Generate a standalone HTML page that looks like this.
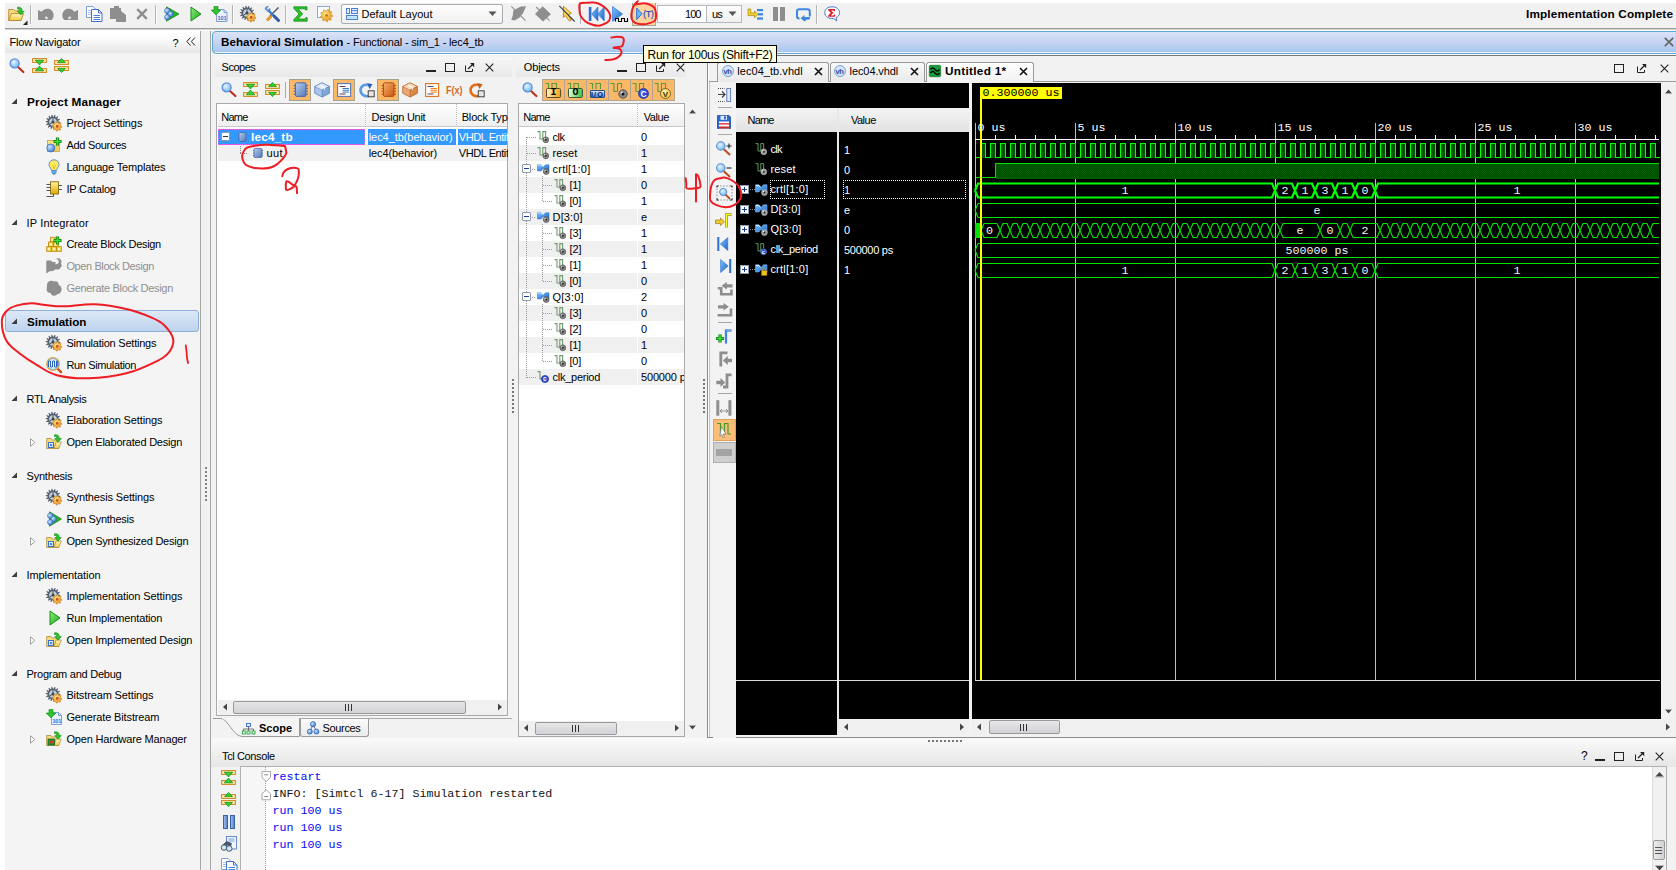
<!DOCTYPE html>
<html><head><meta charset="utf-8"><title>Vivado</title>
<style>
html,body{margin:0;padding:0;}
html{overflow:hidden;width:1676px;height:870px;}
body{width:1676px;height:870px;overflow:hidden;position:relative;background:#f2f2f2;font-family:"Liberation Sans",sans-serif;font-size:11px;color:#000;}
div,span,svg{position:absolute;box-sizing:border-box;}
svg{overflow:visible;}
.t{white-space:nowrap;font-size:11px;}
.m{font-family:"Liberation Mono",monospace;white-space:nowrap;}
</style></head><body>
<div style="left:0;top:0;width:1676px;height:870px;overflow:hidden;">
<div style="left:0px;top:0px;width:1676px;height:29px;background:#f1f1f1;"></div>
<div style="left:0px;top:28px;width:1676px;height:1px;background:#9a9e9a;"></div>
<div style="left:0px;top:29px;width:1676px;height:1px;background:#d4d6d4;"></div>
<div style="left:0px;top:30px;width:1676px;height:1px;background:#fafafa;"></div>
<div style="left:632px;top:2px;width:24px;height:24px;background:#fdd3a0;border:1px solid #a8a890;"></div>
<div style="left:341px;top:4px;width:162px;height:20px;background:linear-gradient(#fdfdfd,#f0f0f0);border:1px solid #a8acb3;border-radius:2px;"></div>
<span class="t" style="left:361.5px;top:7.0px;height:14px;line-height:14px;font-size:11px;letter-spacing:0.005px;">Default Layout</span>
<svg style="left:488px;top:11px" width="9" height="6" viewBox="0 0 9 6" ><path d="M0.5 0.5h8l-4 4.5z" fill="#555"/></svg>
<div style="left:657px;top:5px;width:50px;height:18px;background:#fff;border:1px solid #b5b9c0;"></div>
<span class="t" style="left:685px;top:7.0px;height:14px;line-height:14px;font-size:11px;letter-spacing:-0.941px;">100</span>
<div style="left:706px;top:5px;width:36px;height:18px;background:linear-gradient(#fdfdfd,#f0f0f0);border:1px solid #b5b9c0;"></div>
<span class="t" style="left:712px;top:7.0px;height:14px;line-height:14px;font-size:11px;letter-spacing:-0.745px;">us</span>
<svg style="left:728px;top:11px" width="9" height="6" viewBox="0 0 9 6" ><path d="M0.5 0.5h8l-4 4.5z" fill="#555"/></svg>
<span class="t" style="left:1526px;top:7.0px;height:14px;line-height:14px;font-size:11px;font-weight:bold;letter-spacing:0.130px;transform:scaleX(1.0700);transform-origin:0 50%;">Implementation Complete</span>
<div style="left:30px;top:5px;width:1px;height:19px;background:#b4b4b4;"></div>
<div style="left:31px;top:5px;width:1px;height:19px;background:#fbfbfb;"></div>
<div style="left:155px;top:5px;width:1px;height:19px;background:#b4b4b4;"></div>
<div style="left:156px;top:5px;width:1px;height:19px;background:#fbfbfb;"></div>
<div style="left:232px;top:5px;width:1px;height:19px;background:#b4b4b4;"></div>
<div style="left:233px;top:5px;width:1px;height:19px;background:#fbfbfb;"></div>
<div style="left:285px;top:5px;width:1px;height:19px;background:#b4b4b4;"></div>
<div style="left:286px;top:5px;width:1px;height:19px;background:#fbfbfb;"></div>
<div style="left:580px;top:5px;width:1px;height:19px;background:#b4b4b4;"></div>
<div style="left:581px;top:5px;width:1px;height:19px;background:#fbfbfb;"></div>
<div style="left:816px;top:5px;width:1px;height:19px;background:#b4b4b4;"></div>
<div style="left:817px;top:5px;width:1px;height:19px;background:#fbfbfb;"></div>
<div style="left:5px;top:31px;width:195px;height:839px;background:#f4f4f4;"></div>
<div style="left:200px;top:31px;width:1px;height:839px;background:#a3a8a3;"></div>
<div style="left:201px;top:31px;width:9px;height:839px;background:#f1f1f1;"></div>
<div style="left:210px;top:31px;width:1px;height:839px;background:#a3a8a3;"></div>
<div style="left:5px;top:31px;width:195px;height:22px;background:linear-gradient(#ffffff 0,#fbfbfb 35%,#e6e6e6 100%);"></div>
<span class="t" style="left:9.5px;top:35.0px;height:14px;line-height:14px;font-size:11px;letter-spacing:-0.175px;">Flow Navigator</span>
<span class="t" style="left:172.5px;top:35.5px;height:14px;line-height:14px;font-size:11px;letter-spacing:-0.294px;">?</span>
<svg style="left:186px;top:37px" width="10" height="9" viewBox="0 0 10 9" ><path d="M4.5 0.5L0.8 4.5L4.5 8.5M9 0.5L5.3 4.5L9 8.5" fill="none" stroke="#222" stroke-width="1"/></svg>
<div style="left:205px;top:467px;width:2px;height:2px;background:#828282;"></div>
<div style="left:205px;top:471px;width:2px;height:2px;background:#828282;"></div>
<div style="left:205px;top:475px;width:2px;height:2px;background:#828282;"></div>
<div style="left:205px;top:479px;width:2px;height:2px;background:#828282;"></div>
<div style="left:205px;top:483px;width:2px;height:2px;background:#828282;"></div>
<div style="left:205px;top:487px;width:2px;height:2px;background:#828282;"></div>
<div style="left:205px;top:491px;width:2px;height:2px;background:#828282;"></div>
<div style="left:205px;top:495px;width:2px;height:2px;background:#828282;"></div>
<div style="left:205px;top:499px;width:2px;height:2px;background:#828282;"></div>
<div style="left:5px;top:310px;width:194px;height:22px;background:linear-gradient(#dde8f6,#bdd3ee);border:1px solid #8fb0d8;border-radius:3px;"></div>
<svg style="left:11px;top:98px" width="7" height="7" viewBox="0 0 7 7" ><path d="M6 0.5V6H0.5z" fill="#3c3c3c"/></svg>
<span class="t" style="left:27.2px;top:95.0px;height:14px;line-height:14px;font-size:11px;font-weight:bold;letter-spacing:0.156px;transform:scaleX(1.0700);transform-origin:0 50%;">Project Manager</span>
<span class="t" style="left:66.4px;top:116.0px;height:14px;line-height:14px;font-size:11px;letter-spacing:-0.067px;">Project Settings</span>
<span class="t" style="left:66.4px;top:138.0px;height:14px;line-height:14px;font-size:11px;letter-spacing:-0.284px;">Add Sources</span>
<span class="t" style="left:66.4px;top:160.0px;height:14px;line-height:14px;font-size:11px;letter-spacing:-0.168px;">Language Templates</span>
<span class="t" style="left:66.4px;top:182.0px;height:14px;line-height:14px;font-size:11px;letter-spacing:-0.175px;">IP Catalog</span>
<svg style="left:11px;top:219px" width="7" height="7" viewBox="0 0 7 7" ><path d="M6 0.5V6H0.5z" fill="#3c3c3c"/></svg>
<span class="t" style="left:26.5px;top:216.0px;height:14px;line-height:14px;font-size:11px;letter-spacing:0.157px;">IP Integrator</span>
<span class="t" style="left:66.4px;top:237.0px;height:14px;line-height:14px;font-size:11px;letter-spacing:-0.301px;">Create Block Design</span>
<span class="t" style="left:66.4px;top:259.0px;height:14px;line-height:14px;font-size:11px;letter-spacing:-0.392px;color:#8f8f8f;">Open Block Design</span>
<span class="t" style="left:66.4px;top:281.0px;height:14px;line-height:14px;font-size:11px;letter-spacing:-0.313px;color:#8f8f8f;">Generate Block Design</span>
<svg style="left:11px;top:318px" width="7" height="7" viewBox="0 0 7 7" ><path d="M6 0.5V6H0.5z" fill="#3c3c3c"/></svg>
<span class="t" style="left:27.2px;top:315.0px;height:14px;line-height:14px;font-size:11px;font-weight:bold;letter-spacing:0.000px;transform:scaleX(1.0565);transform-origin:0 50%;">Simulation</span>
<span class="t" style="left:66.4px;top:336.0px;height:14px;line-height:14px;font-size:11px;letter-spacing:-0.225px;">Simulation Settings</span>
<span class="t" style="left:66.4px;top:358.0px;height:14px;line-height:14px;font-size:11px;letter-spacing:-0.355px;">Run Simulation</span>
<svg style="left:11px;top:395px" width="7" height="7" viewBox="0 0 7 7" ><path d="M6 0.5V6H0.5z" fill="#3c3c3c"/></svg>
<span class="t" style="left:26.5px;top:392.0px;height:14px;line-height:14px;font-size:11px;letter-spacing:-0.312px;">RTL Analysis</span>
<span class="t" style="left:66.4px;top:413.0px;height:14px;line-height:14px;font-size:11px;letter-spacing:-0.126px;">Elaboration Settings</span>
<span class="t" style="left:66.4px;top:435.0px;height:14px;line-height:14px;font-size:11px;letter-spacing:-0.217px;">Open Elaborated Design</span>
<svg style="left:30px;top:438px" width="6" height="9" viewBox="0 0 6 9" ><path d="M0.5 0.7L4.8 4.5L0.5 8.3z" fill="#fdfdfd" stroke="#a0a0a0" stroke-width="1"/></svg>
<svg style="left:11px;top:472px" width="7" height="7" viewBox="0 0 7 7" ><path d="M6 0.5V6H0.5z" fill="#3c3c3c"/></svg>
<span class="t" style="left:26.5px;top:469.0px;height:14px;line-height:14px;font-size:11px;letter-spacing:-0.199px;">Synthesis</span>
<span class="t" style="left:66.4px;top:490.0px;height:14px;line-height:14px;font-size:11px;letter-spacing:-0.143px;">Synthesis Settings</span>
<span class="t" style="left:66.4px;top:512.0px;height:14px;line-height:14px;font-size:11px;letter-spacing:-0.258px;">Run Synthesis</span>
<span class="t" style="left:66.4px;top:534.0px;height:14px;line-height:14px;font-size:11px;letter-spacing:-0.231px;">Open Synthesized Design</span>
<svg style="left:30px;top:537px" width="6" height="9" viewBox="0 0 6 9" ><path d="M0.5 0.7L4.8 4.5L0.5 8.3z" fill="#fdfdfd" stroke="#a0a0a0" stroke-width="1"/></svg>
<svg style="left:11px;top:571px" width="7" height="7" viewBox="0 0 7 7" ><path d="M6 0.5V6H0.5z" fill="#3c3c3c"/></svg>
<span class="t" style="left:26.5px;top:568.0px;height:14px;line-height:14px;font-size:11px;letter-spacing:-0.089px;">Implementation</span>
<span class="t" style="left:66.4px;top:589.0px;height:14px;line-height:14px;font-size:11px;letter-spacing:-0.089px;">Implementation Settings</span>
<span class="t" style="left:66.4px;top:611.0px;height:14px;line-height:14px;font-size:11px;letter-spacing:-0.140px;">Run Implementation</span>
<span class="t" style="left:66.4px;top:633.0px;height:14px;line-height:14px;font-size:11px;letter-spacing:-0.216px;">Open Implemented Design</span>
<svg style="left:30px;top:636px" width="6" height="9" viewBox="0 0 6 9" ><path d="M0.5 0.7L4.8 4.5L0.5 8.3z" fill="#fdfdfd" stroke="#a0a0a0" stroke-width="1"/></svg>
<svg style="left:11px;top:670px" width="7" height="7" viewBox="0 0 7 7" ><path d="M6 0.5V6H0.5z" fill="#3c3c3c"/></svg>
<span class="t" style="left:26.5px;top:667.0px;height:14px;line-height:14px;font-size:11px;letter-spacing:-0.246px;">Program and Debug</span>
<span class="t" style="left:66.4px;top:688.0px;height:14px;line-height:14px;font-size:11px;letter-spacing:-0.129px;">Bitstream Settings</span>
<span class="t" style="left:66.4px;top:710.0px;height:14px;line-height:14px;font-size:11px;letter-spacing:-0.136px;">Generate Bitstream</span>
<span class="t" style="left:66.4px;top:732.0px;height:14px;line-height:14px;font-size:11px;letter-spacing:-0.177px;">Open Hardware Manager</span>
<svg style="left:30px;top:735px" width="6" height="9" viewBox="0 0 6 9" ><path d="M0.5 0.7L4.8 4.5L0.5 8.3z" fill="#fdfdfd" stroke="#a0a0a0" stroke-width="1"/></svg>
<div style="left:212px;top:31px;width:1470px;height:23px;background:linear-gradient(#dae3f7,#c4d2f2 55%,#a5c6ee);border:1px solid #62a8d4;border-radius:4px;"></div>
<div style="left:215px;top:52px;width:1461px;height:1px;background:#eef4fc;"></div>
<div style="left:211px;top:54px;width:1465px;height:1px;background:#fbfbfb;"></div>
<span class="t" style="left:220.5px;top:35.0px;height:14px;line-height:14px;font-size:11px;font-weight:bold;letter-spacing:-0.000px;transform:scaleX(1.0603);transform-origin:0 50%;">Behavioral Simulation</span>
<span class="t" style="left:346.5px;top:35.0px;height:14px;line-height:14px;font-size:11px;letter-spacing:-0.164px;">- Functional - sim_1 - lec4_tb</span>
<svg style="left:1664px;top:37px" width="10" height="10" viewBox="0 0 10 10" ><path d="M0.8 0.8L9.2 9.2M9.2 0.8L0.8 9.2" stroke="#666" stroke-width="1.7"/></svg>
<div style="left:215px;top:57px;width:297px;height:20px;background:linear-gradient(#f6f6f6,#e9e9e9);"></div>
<span class="t" style="left:221.6px;top:60.0px;height:14px;line-height:14px;font-size:11px;letter-spacing:-0.489px;">Scopes</span>
<div style="left:426px;top:70px;width:10px;height:2px;background:#222;"></div>
<div style="left:445px;top:63px;width:10px;height:9px;border:1px solid #222;border-top-width:1.5px;"></div>
<svg style="left:464px;top:62px" width="11" height="11" viewBox="0 0 11 11" ><path d="M1.5 3.5V9.5H8.5V7" fill="none" stroke="#222" stroke-width="1"/><path d="M4 7L9.5 1.5" stroke="#222" stroke-width="1.2"/><path d="M6 1h4.2v4.2z" fill="#222"/></svg>
<svg style="left:485px;top:63px" width="9" height="9" viewBox="0 0 9 9" ><path d="M0.7 0.7L8.3 8.3M8.3 0.7L0.7 8.3" stroke="#222" stroke-width="1.1"/></svg>
<div style="left:289px;top:79px;width:22px;height:22px;background:#fbb868;border:1px solid #a4a48c;"></div>
<div style="left:333px;top:79px;width:22px;height:22px;background:#fbb868;border:1px solid #a4a48c;"></div>
<div style="left:377px;top:79px;width:22px;height:22px;background:#fbb868;border:1px solid #a4a48c;"></div>
<div style="left:285px;top:82px;width:1px;height:16px;background:#aaa;"></div>
<div style="left:216px;top:103px;width:292px;height:613px;background:#fff;border:1px solid #a9a9a9;"></div>
<div style="left:218px;top:104px;width:289px;height:23px;background:linear-gradient(#ffffff,#efefef);border-bottom:1px solid #c9c9c9;"></div>
<div style="left:365px;top:104px;width:1px;height:23px;background:repeating-linear-gradient(#bbb 0 1px,#fff 1px 2px);"></div>
<div style="left:456px;top:104px;width:1px;height:23px;background:repeating-linear-gradient(#bbb 0 1px,#fff 1px 2px);"></div>
<span class="t" style="left:221.3px;top:110.0px;height:14px;line-height:14px;font-size:11px;letter-spacing:-0.784px;">Name</span>
<span class="t" style="left:371.5px;top:110.0px;height:14px;line-height:14px;font-size:11px;letter-spacing:-0.272px;">Design Unit</span>
<span class="t" style="left:461.7px;top:110.0px;height:14px;line-height:14px;font-size:11px;letter-spacing:-0.169px;width:46px;overflow:hidden;">Block Type</span>
<div style="left:218px;top:129px;width:147px;height:16px;background:#3399ff;border:1px dotted #ee66ee;"></div>
<div style="left:368px;top:129px;width:88px;height:16px;background:#3399ff;"></div>
<div style="left:458px;top:129px;width:49px;height:16px;background:#3399ff;"></div>
<div style="left:221px;top:132px;width:9px;height:9px;background:#fff;border:1px solid #8c9cb0;"></div>
<div style="left:223px;top:136px;width:5px;height:1px;background:#333;"></div>
<span class="t" style="left:251.2px;top:130.0px;height:14px;line-height:14px;font-size:11px;font-weight:bold;letter-spacing:0.163px;transform:scaleX(1.0700);transform-origin:0 50%;color:#fff;">lec4_tb</span>
<span class="t" style="left:368.7px;top:130.0px;height:14px;line-height:14px;font-size:11px;letter-spacing:-0.060px;color:#fff;">lec4_tb(behavior)</span>
<span class="t" style="left:458.8px;top:130.0px;height:14px;line-height:14px;font-size:11px;letter-spacing:-0.429px;color:#fff;width:49px;overflow:hidden;">VHDL Entity</span>
<div style="left:218px;top:145px;width:289px;height:16px;background:#f1f1f1;"></div>
<span class="t" style="left:266.6px;top:146.0px;height:14px;line-height:14px;font-size:11px;letter-spacing:0.283px;">uut</span>
<span class="t" style="left:368.7px;top:146.0px;height:14px;line-height:14px;font-size:11px;letter-spacing:-0.089px;">lec4(behavior)</span>
<span class="t" style="left:458.8px;top:146.0px;height:14px;line-height:14px;font-size:11px;letter-spacing:-0.429px;width:49px;overflow:hidden;">VHDL Entity</span>
<div style="left:240px;top:146px;width:1px;height:8px;background:repeating-linear-gradient(#888 0 1px,transparent 1px 2px);"></div>
<div style="left:240px;top:153px;width:8px;height:1px;background:repeating-linear-gradient(90deg,#888 0 1px,transparent 1px 2px);"></div>
<div style="left:218px;top:700px;width:289px;height:15px;background:#f0f0f0;"></div>
<svg style="left:222px;top:703px" width="6" height="8" viewBox="0 0 6 8" ><path d="M5 0.5V7.5L1 4z" fill="#444"/></svg>
<svg style="left:497px;top:703px" width="6" height="8" viewBox="0 0 6 8" ><path d="M1 0.5V7.5L5 4z" fill="#444"/></svg>
<div style="left:233px;top:701px;width:233px;height:13px;background:linear-gradient(#e6e6e6,#d2d2d8);border:1px solid #9a9a9a;border-radius:2px;"></div>
<div style="left:345px;top:704px;width:1px;height:7px;background:#333;"></div>
<div style="left:348px;top:704px;width:1px;height:7px;background:#333;"></div>
<div style="left:351px;top:704px;width:1px;height:7px;background:#333;"></div>
<div style="left:213px;top:718px;width:299px;height:1px;background:#a9a9a9;"></div>
<svg style="left:213px;top:718px" width="90" height="22" viewBox="0 0 90 22" ><path d="M0 0.5H8C15 1 20 18 29 18.5H86.5V0.5" fill="#f4f4f4" stroke="#9a9a9a" stroke-width="1"/><path d="M9 0.5H86" stroke="#f4f4f4" stroke-width="1.5"/></svg>
<span class="t" style="left:258.7px;top:721.0px;height:14px;line-height:14px;font-size:11px;font-weight:bold;letter-spacing:0.000px;transform:scaleX(0.9996);transform-origin:0 50%;">Scope</span>
<div style="left:300px;top:719px;width:69px;height:18px;background:linear-gradient(#fafafa,#ebebeb);border:1px solid #9a9a9a;border-top:none;border-radius:0 0 3px 3px;"></div>
<span class="t" style="left:322.6px;top:721.0px;height:14px;line-height:14px;font-size:11px;letter-spacing:-0.362px;">Sources</span>
<div style="left:516px;top:57px;width:170px;height:20px;background:linear-gradient(#f6f6f6,#e9e9e9);"></div>
<span class="t" style="left:523.8px;top:60.0px;height:14px;line-height:14px;font-size:11px;letter-spacing:-0.168px;">Objects</span>
<div style="left:617px;top:70px;width:10px;height:2px;background:#222;"></div>
<div style="left:636px;top:63px;width:10px;height:9px;border:1px solid #222;border-top-width:1.5px;"></div>
<svg style="left:655px;top:62px" width="11" height="11" viewBox="0 0 11 11" ><path d="M1.5 3.5V9.5H8.5V7" fill="none" stroke="#222" stroke-width="1"/><path d="M4 7L9.5 1.5" stroke="#222" stroke-width="1.2"/><path d="M6 1h4.2v4.2z" fill="#222"/></svg>
<svg style="left:676px;top:63px" width="9" height="9" viewBox="0 0 9 9" ><path d="M0.7 0.7L8.3 8.3M8.3 0.7L0.7 8.3" stroke="#222" stroke-width="1.1"/></svg>
<div style="left:542px;top:79px;width:22.5px;height:22px;background:#fbb868;border:1px solid #b4a48c;"></div>
<div style="left:564px;top:79px;width:22.5px;height:22px;background:#fbb868;border:1px solid #b4a48c;"></div>
<div style="left:586px;top:79px;width:22.5px;height:22px;background:#fbb868;border:1px solid #b4a48c;"></div>
<div style="left:608px;top:79px;width:22.5px;height:22px;background:#fbb868;border:1px solid #b4a48c;"></div>
<div style="left:630px;top:79px;width:22.5px;height:22px;background:#fbb868;border:1px solid #b4a48c;"></div>
<div style="left:652px;top:79px;width:22.5px;height:22px;background:#fbb868;border:1px solid #b4a48c;"></div>
<div style="left:518px;top:103px;width:167px;height:634px;background:#fff;border:1px solid #a9a9a9;"></div>
<div style="left:519px;top:104px;width:165px;height:23px;background:linear-gradient(#ffffff,#efefef);border-bottom:1px solid #c9c9c9;"></div>
<div style="left:637px;top:104px;width:1px;height:23px;background:repeating-linear-gradient(#bbb 0 1px,#fff 1px 2px);"></div>
<span class="t" style="left:523.2px;top:110.0px;height:14px;line-height:14px;font-size:11px;letter-spacing:-0.727px;">Name</span>
<span class="t" style="left:643.7px;top:110.0px;height:14px;line-height:14px;font-size:11px;letter-spacing:-0.426px;">Value</span>
<span class="t" style="left:552.6px;top:130.0px;height:14px;line-height:14px;font-size:11px;letter-spacing:-0.578px;">clk</span>
<span class="t" style="left:641px;top:130.0px;height:14px;line-height:14px;font-size:11px;letter-spacing:-0.294px;width:43px;overflow:hidden;">0</span>
<div style="left:519px;top:145px;width:165px;height:16px;background:#f0f0f0;"></div>
<span class="t" style="left:552.6px;top:146.0px;height:14px;line-height:14px;font-size:11px;letter-spacing:0.077px;">reset</span>
<span class="t" style="left:641px;top:146.0px;height:14px;line-height:14px;font-size:11px;letter-spacing:-0.294px;width:43px;overflow:hidden;">1</span>
<span class="t" style="left:552.6px;top:162.0px;height:14px;line-height:14px;font-size:11px;letter-spacing:0.192px;">crtl[1:0]</span>
<span class="t" style="left:641px;top:162.0px;height:14px;line-height:14px;font-size:11px;letter-spacing:-0.294px;width:43px;overflow:hidden;">1</span>
<div style="left:519px;top:177px;width:165px;height:16px;background:#f0f0f0;"></div>
<span class="t" style="left:569.5px;top:178.0px;height:14px;line-height:14px;font-size:11px;letter-spacing:-0.332px;">[1]</span>
<span class="t" style="left:641px;top:178.0px;height:14px;line-height:14px;font-size:11px;letter-spacing:-0.294px;width:43px;overflow:hidden;">0</span>
<span class="t" style="left:569.5px;top:194.0px;height:14px;line-height:14px;font-size:11px;letter-spacing:-0.252px;">[0]</span>
<span class="t" style="left:641px;top:194.0px;height:14px;line-height:14px;font-size:11px;letter-spacing:-0.294px;width:43px;overflow:hidden;">1</span>
<div style="left:519px;top:209px;width:165px;height:16px;background:#f0f0f0;"></div>
<span class="t" style="left:552.6px;top:210.0px;height:14px;line-height:14px;font-size:11px;letter-spacing:0.119px;">D[3:0]</span>
<span class="t" style="left:641px;top:210.0px;height:14px;line-height:14px;font-size:11px;letter-spacing:-0.294px;width:43px;overflow:hidden;">e</span>
<span class="t" style="left:569.5px;top:226.0px;height:14px;line-height:14px;font-size:11px;letter-spacing:-0.092px;">[3]</span>
<span class="t" style="left:641px;top:226.0px;height:14px;line-height:14px;font-size:11px;letter-spacing:-0.294px;width:43px;overflow:hidden;">1</span>
<div style="left:519px;top:241px;width:165px;height:16px;background:#f0f0f0;"></div>
<span class="t" style="left:569.5px;top:242.0px;height:14px;line-height:14px;font-size:11px;letter-spacing:-0.092px;">[2]</span>
<span class="t" style="left:641px;top:242.0px;height:14px;line-height:14px;font-size:11px;letter-spacing:-0.294px;width:43px;overflow:hidden;">1</span>
<span class="t" style="left:569.5px;top:258.0px;height:14px;line-height:14px;font-size:11px;letter-spacing:-0.332px;">[1]</span>
<span class="t" style="left:641px;top:258.0px;height:14px;line-height:14px;font-size:11px;letter-spacing:-0.294px;width:43px;overflow:hidden;">1</span>
<div style="left:519px;top:273px;width:165px;height:16px;background:#f0f0f0;"></div>
<span class="t" style="left:569.5px;top:274.0px;height:14px;line-height:14px;font-size:11px;letter-spacing:-0.252px;">[0]</span>
<span class="t" style="left:641px;top:274.0px;height:14px;line-height:14px;font-size:11px;letter-spacing:-0.294px;width:43px;overflow:hidden;">0</span>
<span class="t" style="left:552.6px;top:290.0px;height:14px;line-height:14px;font-size:11px;letter-spacing:0.189px;">Q[3:0]</span>
<span class="t" style="left:641px;top:290.0px;height:14px;line-height:14px;font-size:11px;letter-spacing:-0.294px;width:43px;overflow:hidden;">2</span>
<div style="left:519px;top:305px;width:165px;height:16px;background:#f0f0f0;"></div>
<span class="t" style="left:569.5px;top:306.0px;height:14px;line-height:14px;font-size:11px;letter-spacing:-0.092px;">[3]</span>
<span class="t" style="left:641px;top:306.0px;height:14px;line-height:14px;font-size:11px;letter-spacing:-0.294px;width:43px;overflow:hidden;">0</span>
<span class="t" style="left:569.5px;top:322.0px;height:14px;line-height:14px;font-size:11px;letter-spacing:-0.092px;">[2]</span>
<span class="t" style="left:641px;top:322.0px;height:14px;line-height:14px;font-size:11px;letter-spacing:-0.294px;width:43px;overflow:hidden;">0</span>
<div style="left:519px;top:337px;width:165px;height:16px;background:#f0f0f0;"></div>
<span class="t" style="left:569.5px;top:338.0px;height:14px;line-height:14px;font-size:11px;letter-spacing:-0.332px;">[1]</span>
<span class="t" style="left:641px;top:338.0px;height:14px;line-height:14px;font-size:11px;letter-spacing:-0.294px;width:43px;overflow:hidden;">1</span>
<span class="t" style="left:569.5px;top:354.0px;height:14px;line-height:14px;font-size:11px;letter-spacing:-0.252px;">[0]</span>
<span class="t" style="left:641px;top:354.0px;height:14px;line-height:14px;font-size:11px;letter-spacing:-0.294px;width:43px;overflow:hidden;">0</span>
<div style="left:519px;top:369px;width:165px;height:16px;background:#f0f0f0;"></div>
<span class="t" style="left:552.6px;top:370.0px;height:14px;line-height:14px;font-size:11px;letter-spacing:-0.267px;">clk_period</span>
<span class="t" style="left:641px;top:370.0px;height:14px;line-height:14px;font-size:11px;letter-spacing:-0.162px;width:43px;overflow:hidden;">500000 ps</span>
<div style="left:637px;top:128px;width:1px;height:257px;background:#fff;"></div>
<div style="left:526px;top:137px;width:1px;height:241px;background:repeating-linear-gradient(#999 0 1px,transparent 1px 2px);"></div>
<div style="left:522px;top:164px;width:9px;height:9px;background:#fff;border:1px solid #8c9cb0;border-radius:1px;"></div>
<div style="left:524px;top:168px;width:5px;height:1px;background:#1a3a8a;"></div>
<div style="left:522px;top:212px;width:9px;height:9px;background:#fff;border:1px solid #8c9cb0;border-radius:1px;"></div>
<div style="left:524px;top:216px;width:5px;height:1px;background:#1a3a8a;"></div>
<div style="left:522px;top:292px;width:9px;height:9px;background:#fff;border:1px solid #8c9cb0;border-radius:1px;"></div>
<div style="left:524px;top:296px;width:5px;height:1px;background:#1a3a8a;"></div>
<div style="left:527px;top:137px;width:9px;height:1px;background:repeating-linear-gradient(90deg,#999 0 1px,transparent 1px 2px);"></div>
<div style="left:527px;top:153px;width:9px;height:1px;background:repeating-linear-gradient(90deg,#999 0 1px,transparent 1px 2px);"></div>
<div style="left:527px;top:377px;width:9px;height:1px;background:repeating-linear-gradient(90deg,#999 0 1px,transparent 1px 2px);"></div>
<div style="left:532px;top:169px;width:4px;height:1px;background:repeating-linear-gradient(90deg,#999 0 1px,transparent 1px 2px);"></div>
<div style="left:532px;top:217px;width:4px;height:1px;background:repeating-linear-gradient(90deg,#999 0 1px,transparent 1px 2px);"></div>
<div style="left:532px;top:297px;width:4px;height:1px;background:repeating-linear-gradient(90deg,#999 0 1px,transparent 1px 2px);"></div>
<div style="left:542px;top:176px;width:1px;height:25px;background:repeating-linear-gradient(#999 0 1px,transparent 1px 2px);"></div>
<div style="left:543px;top:185px;width:9px;height:1px;background:repeating-linear-gradient(90deg,#999 0 1px,transparent 1px 2px);"></div>
<div style="left:543px;top:201px;width:9px;height:1px;background:repeating-linear-gradient(90deg,#999 0 1px,transparent 1px 2px);"></div>
<div style="left:542px;top:224px;width:1px;height:57px;background:repeating-linear-gradient(#999 0 1px,transparent 1px 2px);"></div>
<div style="left:543px;top:233px;width:9px;height:1px;background:repeating-linear-gradient(90deg,#999 0 1px,transparent 1px 2px);"></div>
<div style="left:543px;top:249px;width:9px;height:1px;background:repeating-linear-gradient(90deg,#999 0 1px,transparent 1px 2px);"></div>
<div style="left:543px;top:265px;width:9px;height:1px;background:repeating-linear-gradient(90deg,#999 0 1px,transparent 1px 2px);"></div>
<div style="left:543px;top:281px;width:9px;height:1px;background:repeating-linear-gradient(90deg,#999 0 1px,transparent 1px 2px);"></div>
<div style="left:542px;top:304px;width:1px;height:57px;background:repeating-linear-gradient(#999 0 1px,transparent 1px 2px);"></div>
<div style="left:543px;top:313px;width:9px;height:1px;background:repeating-linear-gradient(90deg,#999 0 1px,transparent 1px 2px);"></div>
<div style="left:543px;top:329px;width:9px;height:1px;background:repeating-linear-gradient(90deg,#999 0 1px,transparent 1px 2px);"></div>
<div style="left:543px;top:345px;width:9px;height:1px;background:repeating-linear-gradient(90deg,#999 0 1px,transparent 1px 2px);"></div>
<div style="left:543px;top:361px;width:9px;height:1px;background:repeating-linear-gradient(90deg,#999 0 1px,transparent 1px 2px);"></div>
<svg style="left:689px;top:108.5px" width="7" height="5" viewBox="0 0 7 5" ><path d="M0.3 4.2H6.7L3.5 0.6z" fill="#444"/><path d="M0 4.6H7" stroke="#999" stroke-width="0.6"/></svg>
<svg style="left:689px;top:725px" width="7" height="5" viewBox="0 0 7 5" ><path d="M0.3 0.8H6.7L3.5 4.4z" fill="#444"/><path d="M0 0.4H7" stroke="#999" stroke-width="0.6"/></svg>
<div style="left:519px;top:721px;width:165px;height:15px;background:#f0f0f0;"></div>
<svg style="left:523px;top:724px" width="6" height="8" viewBox="0 0 6 8" ><path d="M5 0.5V7.5L1 4z" fill="#444"/></svg>
<svg style="left:674px;top:724px" width="6" height="8" viewBox="0 0 6 8" ><path d="M1 0.5V7.5L5 4z" fill="#444"/></svg>
<div style="left:535px;top:722px;width:82px;height:13px;background:linear-gradient(#e6e6e6,#d2d2d8);border:1px solid #9a9a9a;border-radius:2px;"></div>
<div style="left:572px;top:725px;width:1px;height:7px;background:#333;"></div>
<div style="left:575px;top:725px;width:1px;height:7px;background:#333;"></div>
<div style="left:578px;top:725px;width:1px;height:7px;background:#333;"></div>
<div style="left:703px;top:379px;width:2px;height:2px;background:#767676;"></div>
<div style="left:512px;top:379px;width:2px;height:2px;background:#767676;"></div>
<div style="left:703px;top:383px;width:2px;height:2px;background:#767676;"></div>
<div style="left:512px;top:383px;width:2px;height:2px;background:#767676;"></div>
<div style="left:703px;top:387px;width:2px;height:2px;background:#767676;"></div>
<div style="left:512px;top:387px;width:2px;height:2px;background:#767676;"></div>
<div style="left:703px;top:391px;width:2px;height:2px;background:#767676;"></div>
<div style="left:512px;top:391px;width:2px;height:2px;background:#767676;"></div>
<div style="left:703px;top:395px;width:2px;height:2px;background:#767676;"></div>
<div style="left:512px;top:395px;width:2px;height:2px;background:#767676;"></div>
<div style="left:703px;top:399px;width:2px;height:2px;background:#767676;"></div>
<div style="left:512px;top:399px;width:2px;height:2px;background:#767676;"></div>
<div style="left:703px;top:403px;width:2px;height:2px;background:#767676;"></div>
<div style="left:512px;top:403px;width:2px;height:2px;background:#767676;"></div>
<div style="left:703px;top:407px;width:2px;height:2px;background:#767676;"></div>
<div style="left:512px;top:407px;width:2px;height:2px;background:#767676;"></div>
<div style="left:703px;top:411px;width:2px;height:2px;background:#767676;"></div>
<div style="left:512px;top:411px;width:2px;height:2px;background:#767676;"></div>
<div style="left:707px;top:55px;width:969px;height:1px;background:#787878;"></div>
<div style="left:707px;top:81px;width:969px;height:1px;background:#9a9a9a;"></div>
<div style="left:707px;top:55px;width:1px;height:683px;background:#8a8a8a;"></div>
<div style="left:708px;top:56px;width:1px;height:682px;background:#fff;"></div>
<div style="left:709px;top:82px;width:1px;height:656px;background:#c0c0c0;"></div>
<div style="left:707px;top:737px;width:969px;height:1px;background:#8a8a8a;"></div>
<div style="left:707px;top:738px;width:969px;height:1px;background:#c0c0c0;"></div>
<div style="left:717px;top:62px;width:112px;height:20px;background:linear-gradient(#f9f9f9,#e9e9e9);border:1px solid #9a9a9a;border-bottom:none;border-radius:3px 3px 0 0;"></div>
<div style="left:830px;top:62px;width:95px;height:20px;background:linear-gradient(#f9f9f9,#e9e9e9);border:1px solid #9a9a9a;border-bottom:none;border-radius:3px 3px 0 0;"></div>
<div style="left:926px;top:62px;width:108px;height:20px;background:linear-gradient(#ffffff,#f1f1f1);border:1px solid #9a9a9a;border-bottom:none;border-radius:3px 3px 0 0;"></div>
<div style="left:927px;top:81px;width:106px;height:1px;background:#f1f1f1;"></div>
<span class="t" style="left:737.3px;top:64.0px;height:14px;line-height:14px;font-size:11px;letter-spacing:0.046px;">lec04_tb.vhdl</span>
<span class="t" style="left:849.6px;top:64.0px;height:14px;line-height:14px;font-size:11px;letter-spacing:-0.098px;">lec04.vhdl</span>
<span class="t" style="left:945px;top:64.0px;height:14px;line-height:14px;font-size:11px;font-weight:bold;letter-spacing:0.276px;transform:scaleX(1.0700);transform-origin:0 50%;">Untitled 1*</span>
<svg style="left:814px;top:67px" width="9" height="9" viewBox="0 0 9 9" ><path d="M1 1L8 8M8 1L1 8" stroke="#111" stroke-width="1.6"/></svg>
<svg style="left:910px;top:67px" width="9" height="9" viewBox="0 0 9 9" ><path d="M1 1L8 8M8 1L1 8" stroke="#111" stroke-width="1.6"/></svg>
<svg style="left:1018.5px;top:67px" width="9" height="9" viewBox="0 0 9 9" ><path d="M1 1L8 8M8 1L1 8" stroke="#111" stroke-width="1.6"/></svg>
<div style="left:1614px;top:64px;width:10px;height:9px;border:1px solid #222;border-top-width:1.5px;"></div>
<svg style="left:1635.5px;top:63px" width="11" height="11" viewBox="0 0 11 11" ><path d="M1.5 3.5V9.5H8.5V7" fill="none" stroke="#222" stroke-width="1"/><path d="M4 7L9.5 1.5" stroke="#222" stroke-width="1.2"/><path d="M6 1h4.2v4.2z" fill="#222"/></svg>
<svg style="left:1659.5px;top:64px" width="9" height="9" viewBox="0 0 9 9" ><path d="M0.7 0.7L8.3 8.3M8.3 0.7L0.7 8.3" stroke="#222" stroke-width="1.1"/></svg>
<div style="left:713px;top:82px;width:23px;height:656px;background:#f3f3f3;"></div>
<div style="left:713px;top:419px;width:23px;height:22px;background:#fbbd77;border:1px solid #e0a15a;"></div>
<div style="left:713px;top:442px;width:23px;height:21px;background:#cfcfcf;border:1px solid #b0b0b0;"></div>
<div style="left:718px;top:107px;width:14px;height:1px;background:#a8a8a8;"></div>
<div style="left:718px;top:134px;width:14px;height:1px;background:#a8a8a8;"></div>
<div style="left:718px;top:322px;width:14px;height:1px;background:#a8a8a8;"></div>
<div style="left:718px;top:393px;width:14px;height:1px;background:#a8a8a8;"></div>
<div style="left:736px;top:83px;width:925px;height:636px;background:#000;"></div>
<div style="left:736px;top:108px;width:101px;height:24px;background:linear-gradient(#f4f4f4,#e2e2e2);"></div>
<div style="left:839px;top:108px;width:130px;height:24px;background:linear-gradient(#f4f4f4,#e2e2e2);"></div>
<span class="t" style="left:747.5px;top:113.0px;height:14px;line-height:14px;font-size:11px;letter-spacing:-0.812px;">Name</span>
<span class="t" style="left:851px;top:113.0px;height:14px;line-height:14px;font-size:11px;letter-spacing:-0.515px;">Value</span>
<div style="left:837px;top:108px;width:2px;height:611px;background:#e8e8e8;"></div>
<div style="left:969px;top:83px;width:3px;height:652px;background:#f2f2f2;"></div>
<div style="left:736px;top:680px;width:101px;height:1px;background:#ddd;"></div>
<div style="left:839px;top:680px;width:130px;height:1px;background:#ddd;"></div>
<div style="left:975px;top:680px;width:685px;height:1px;background:#ddd;"></div>
<div style="left:736px;top:719px;width:101px;height:16px;background:#000;"></div>
<div style="left:837px;top:719px;width:2px;height:16px;background:#e8e8e8;"></div>
<div style="left:839px;top:719px;width:130px;height:16px;background:#f0f0f0;"></div>
<svg style="left:843px;top:723px" width="6" height="8" viewBox="0 0 6 8" ><path d="M5 0.5V7.5L1 4z" fill="#444"/></svg>
<svg style="left:959px;top:723px" width="6" height="8" viewBox="0 0 6 8" ><path d="M1 0.5V7.5L5 4z" fill="#444"/></svg>
<div style="left:972px;top:719px;width:704px;height:16px;background:#f0f0f0;"></div>
<svg style="left:976px;top:723px" width="6" height="8" viewBox="0 0 6 8" ><path d="M5 0.5V7.5L1 4z" fill="#444"/></svg>
<svg style="left:1665px;top:723px" width="6" height="8" viewBox="0 0 6 8" ><path d="M1 0.5V7.5L5 4z" fill="#444"/></svg>
<div style="left:989px;top:720px;width:71px;height:14px;background:linear-gradient(#e8e8e8,#d0d0d8);border:1px solid #9a9a9a;border-radius:2px;"></div>
<div style="left:1020px;top:724px;width:1px;height:7px;background:#333;"></div>
<div style="left:1023px;top:724px;width:1px;height:7px;background:#333;"></div>
<div style="left:1026px;top:724px;width:1px;height:7px;background:#333;"></div>
<div style="left:1661px;top:83px;width:15px;height:636px;background:#f1f1f1;"></div>
<svg style="left:1665px;top:88.5px" width="7" height="5" viewBox="0 0 7 5" ><path d="M0.3 4.2H6.7L3.5 0.6z" fill="#444"/><path d="M0 4.6H7" stroke="#999" stroke-width="0.6"/></svg>
<svg style="left:1665px;top:709px" width="7" height="5" viewBox="0 0 7 5" ><path d="M0.3 0.8H6.7L3.5 4.4z" fill="#444"/><path d="M0 0.4H7" stroke="#999" stroke-width="0.6"/></svg>
<span class="t" style="left:770.4px;top:142.0px;height:14px;line-height:14px;font-size:11px;letter-spacing:-0.658px;color:#fff;">clk</span>
<span class="t" style="left:844px;top:143.0px;height:14px;line-height:14px;font-size:11px;letter-spacing:-0.294px;color:#fff;">1</span>
<svg style="left:755.3px;top:143px" width="12" height="12" viewBox="0 0 12 12" ><path d="M0.5 0.6H3V8H5.8V0.6H8.6V6" fill="none" stroke="#5f9a5f" stroke-width="1"/><circle cx="8.8" cy="8.8" r="2.9" fill="#9a9a9a" stroke="#c8c8c8" stroke-width="0.6"/><circle cx="8.8" cy="8.8" r="1" fill="#222"/><circle cx="7.8" cy="7.8" r="0.8" fill="#eee"/></svg>
<span class="t" style="left:770.4px;top:162.0px;height:14px;line-height:14px;font-size:11px;letter-spacing:0.188px;color:#fff;">reset</span>
<span class="t" style="left:844px;top:163.0px;height:14px;line-height:14px;font-size:11px;letter-spacing:-0.294px;color:#fff;">0</span>
<svg style="left:755.3px;top:163px" width="12" height="12" viewBox="0 0 12 12" ><path d="M0.5 0.6H3V8H5.8V0.6H8.6V6" fill="none" stroke="#5f9a5f" stroke-width="1"/><circle cx="8.8" cy="8.8" r="2.9" fill="#9a9a9a" stroke="#c8c8c8" stroke-width="0.6"/><circle cx="8.8" cy="8.8" r="1" fill="#222"/><circle cx="7.8" cy="7.8" r="0.8" fill="#eee"/></svg>
<span class="t" style="left:770.4px;top:182.0px;height:14px;line-height:14px;font-size:11px;letter-spacing:0.227px;color:#fff;">crtl[1:0]</span>
<span class="t" style="left:844px;top:183.0px;height:14px;line-height:14px;font-size:11px;letter-spacing:-0.294px;color:#fff;">1</span>
<svg style="left:754.8px;top:183.5px" width="13" height="12" viewBox="0 0 13 12" ><path d="M0.5 0.8H4L6.2 3.6L8.4 0.8H12V8H8.4L6.2 5.2L4 8H0.5z" fill="url(#gBlue)" stroke="#8ac8ff" stroke-width="0.5"/><path d="M1 1.5H3.8L5.5 3.4" stroke="#d8f0ff" stroke-width="1" fill="none"/><circle cx="9.4" cy="8.6" r="2.9" fill="#9a9a9a" stroke="#c8c8c8" stroke-width="0.6"/><circle cx="9.4" cy="8.6" r="1" fill="#222"/><circle cx="8.4" cy="7.6" r="0.8" fill="#eee"/></svg>
<div style="left:740px;top:185px;width:9px;height:9px;background:#fff;border:1px solid #8c9cb0;"></div>
<div style="left:742px;top:189px;width:5px;height:1px;background:#1a3a8a;"></div>
<div style="left:744px;top:187px;width:1px;height:5px;background:#1a3a8a;"></div>
<div style="left:750px;top:189px;width:5px;height:1px;background:repeating-linear-gradient(90deg,#888 0 1px,transparent 1px 2px);"></div>
<span class="t" style="left:770.4px;top:202.0px;height:14px;line-height:14px;font-size:11px;letter-spacing:0.173px;color:#fff;">D[3:0]</span>
<span class="t" style="left:844px;top:203.0px;height:14px;line-height:14px;font-size:11px;letter-spacing:-0.294px;color:#fff;">e</span>
<svg style="left:754.8px;top:203.5px" width="13" height="12" viewBox="0 0 13 12" ><path d="M0.5 0.8H4L6.2 3.6L8.4 0.8H12V8H8.4L6.2 5.2L4 8H0.5z" fill="url(#gBlue)" stroke="#8ac8ff" stroke-width="0.5"/><path d="M1 1.5H3.8L5.5 3.4" stroke="#d8f0ff" stroke-width="1" fill="none"/><circle cx="9.4" cy="8.6" r="2.9" fill="#9a9a9a" stroke="#c8c8c8" stroke-width="0.6"/><circle cx="9.4" cy="8.6" r="1" fill="#222"/><circle cx="8.4" cy="7.6" r="0.8" fill="#eee"/></svg>
<div style="left:740px;top:205px;width:9px;height:9px;background:#fff;border:1px solid #8c9cb0;"></div>
<div style="left:742px;top:209px;width:5px;height:1px;background:#1a3a8a;"></div>
<div style="left:744px;top:207px;width:1px;height:5px;background:#1a3a8a;"></div>
<div style="left:750px;top:209px;width:5px;height:1px;background:repeating-linear-gradient(90deg,#888 0 1px,transparent 1px 2px);"></div>
<span class="t" style="left:770.4px;top:222.0px;height:14px;line-height:14px;font-size:11px;letter-spacing:0.189px;color:#fff;">Q[3:0]</span>
<span class="t" style="left:844px;top:223.0px;height:14px;line-height:14px;font-size:11px;letter-spacing:-0.294px;color:#fff;">0</span>
<svg style="left:754.8px;top:223.5px" width="13" height="12" viewBox="0 0 13 12" ><path d="M0.5 0.8H4L6.2 3.6L8.4 0.8H12V8H8.4L6.2 5.2L4 8H0.5z" fill="url(#gBlue)" stroke="#8ac8ff" stroke-width="0.5"/><path d="M1 1.5H3.8L5.5 3.4" stroke="#d8f0ff" stroke-width="1" fill="none"/><circle cx="9.4" cy="8.6" r="2.9" fill="#9a9a9a" stroke="#c8c8c8" stroke-width="0.6"/><circle cx="9.4" cy="8.6" r="1" fill="#222"/><circle cx="8.4" cy="7.6" r="0.8" fill="#eee"/></svg>
<div style="left:740px;top:225px;width:9px;height:9px;background:#fff;border:1px solid #8c9cb0;"></div>
<div style="left:742px;top:229px;width:5px;height:1px;background:#1a3a8a;"></div>
<div style="left:744px;top:227px;width:1px;height:5px;background:#1a3a8a;"></div>
<div style="left:750px;top:229px;width:5px;height:1px;background:repeating-linear-gradient(90deg,#888 0 1px,transparent 1px 2px);"></div>
<span class="t" style="left:770.4px;top:242.0px;height:14px;line-height:14px;font-size:11px;letter-spacing:-0.257px;color:#fff;">clk_period</span>
<span class="t" style="left:844px;top:243.0px;height:14px;line-height:14px;font-size:11px;letter-spacing:-0.280px;color:#fff;">500000 ps</span>
<svg style="left:755.3px;top:243px" width="12" height="12" viewBox="0 0 12 12" ><path d="M0.5 0.6H3V8H5.8V0.6H8.6V5" fill="none" stroke="#5f9a5f" stroke-width="1"/><circle cx="8.6" cy="8.8" r="3" fill="#2a4ad8" stroke="#8aa0f0" stroke-width="0.5"/><text x="6.8" y="10.8" font-size="6" font-weight="bold" font-family="Liberation Sans" fill="#fff">c</text></svg>
<span class="t" style="left:770.4px;top:262.0px;height:14px;line-height:14px;font-size:11px;letter-spacing:0.227px;color:#fff;">crtl[1:0]</span>
<span class="t" style="left:844px;top:263.0px;height:14px;line-height:14px;font-size:11px;letter-spacing:-0.294px;color:#fff;">1</span>
<svg style="left:754.8px;top:263.5px" width="13" height="12" viewBox="0 0 13 12" ><path d="M0.5 0.8H4L6.2 3.6L8.4 0.8H12V8H8.4L6.2 5.2L4 8H0.5z" fill="url(#gBlue)" stroke="#8ac8ff" stroke-width="0.5"/><path d="M1 1.5H3.8L5.5 3.4" stroke="#d8f0ff" stroke-width="1" fill="none"/><rect x="6.5" y="6.5" width="5.5" height="5" fill="#f0c020" stroke="#8a6a10" stroke-width="0.6"/><path d="M7.8 6.5V5.2C7.8 3.8 10.6 3.8 10.6 5.2V6.5" fill="none" stroke="#c8a020" stroke-width="0.9"/></svg>
<div style="left:740px;top:265px;width:9px;height:9px;background:#fff;border:1px solid #8c9cb0;"></div>
<div style="left:742px;top:269px;width:5px;height:1px;background:#1a3a8a;"></div>
<div style="left:744px;top:267px;width:1px;height:5px;background:#1a3a8a;"></div>
<div style="left:750px;top:269px;width:5px;height:1px;background:repeating-linear-gradient(90deg,#888 0 1px,transparent 1px 2px);"></div>
<div style="left:770px;top:180px;width:55px;height:19px;border:1px dotted #fff;"></div>
<div style="left:843px;top:180px;width:123px;height:19px;border:1px dotted #fff;"></div>
<svg style="left:972px;top:83px" width="688" height="636" viewBox="0 0 688 636" ><defs><pattern id="dg" width="2" height="2" patternUnits="userSpaceOnUse"><rect width="2" height="2" fill="#006000"/><rect width="1" height="1" fill="#005000"/><rect x="1" y="1" width="1" height="1" fill="#004800"/></pattern></defs><rect x="3" y="40" width="1" height="557" fill="#bdbdbd"/><rect x="103" y="40" width="1" height="557" fill="#bdbdbd"/><rect x="203" y="40" width="1" height="557" fill="#bdbdbd"/><rect x="303" y="40" width="1" height="557" fill="#bdbdbd"/><rect x="403" y="40" width="1" height="557" fill="#bdbdbd"/><rect x="503" y="40" width="1" height="557" fill="#bdbdbd"/><rect x="603" y="40" width="1" height="557" fill="#bdbdbd"/><rect x="3" y="56" width="684" height="1" fill="#fff"/><rect x="23" y="52" width="1" height="4" fill="#fff"/><rect x="43" y="52" width="1" height="4" fill="#fff"/><rect x="63" y="52" width="1" height="4" fill="#fff"/><rect x="83" y="52" width="1" height="4" fill="#fff"/><rect x="123" y="52" width="1" height="4" fill="#fff"/><rect x="143" y="52" width="1" height="4" fill="#fff"/><rect x="163" y="52" width="1" height="4" fill="#fff"/><rect x="183" y="52" width="1" height="4" fill="#fff"/><rect x="223" y="52" width="1" height="4" fill="#fff"/><rect x="243" y="52" width="1" height="4" fill="#fff"/><rect x="263" y="52" width="1" height="4" fill="#fff"/><rect x="283" y="52" width="1" height="4" fill="#fff"/><rect x="323" y="52" width="1" height="4" fill="#fff"/><rect x="343" y="52" width="1" height="4" fill="#fff"/><rect x="363" y="52" width="1" height="4" fill="#fff"/><rect x="383" y="52" width="1" height="4" fill="#fff"/><rect x="423" y="52" width="1" height="4" fill="#fff"/><rect x="443" y="52" width="1" height="4" fill="#fff"/><rect x="463" y="52" width="1" height="4" fill="#fff"/><rect x="483" y="52" width="1" height="4" fill="#fff"/><rect x="523" y="52" width="1" height="4" fill="#fff"/><rect x="543" y="52" width="1" height="4" fill="#fff"/><rect x="563" y="52" width="1" height="4" fill="#fff"/><rect x="583" y="52" width="1" height="4" fill="#fff"/><rect x="623" y="52" width="1" height="4" fill="#fff"/><rect x="643" y="52" width="1" height="4" fill="#fff"/><rect x="663" y="52" width="1" height="4" fill="#fff"/><rect x="683" y="52" width="1" height="4" fill="#fff"/><rect x="9" y="61" width="4" height="14" fill="url(#dg)"/><rect x="19" y="61" width="4" height="14" fill="url(#dg)"/><rect x="29" y="61" width="4" height="14" fill="url(#dg)"/><rect x="39" y="61" width="4" height="14" fill="url(#dg)"/><rect x="49" y="61" width="4" height="14" fill="url(#dg)"/><rect x="59" y="61" width="4" height="14" fill="url(#dg)"/><rect x="69" y="61" width="4" height="14" fill="url(#dg)"/><rect x="79" y="61" width="4" height="14" fill="url(#dg)"/><rect x="89" y="61" width="4" height="14" fill="url(#dg)"/><rect x="99" y="61" width="4" height="14" fill="url(#dg)"/><rect x="109" y="61" width="4" height="14" fill="url(#dg)"/><rect x="119" y="61" width="4" height="14" fill="url(#dg)"/><rect x="129" y="61" width="4" height="14" fill="url(#dg)"/><rect x="139" y="61" width="4" height="14" fill="url(#dg)"/><rect x="149" y="61" width="4" height="14" fill="url(#dg)"/><rect x="159" y="61" width="4" height="14" fill="url(#dg)"/><rect x="169" y="61" width="4" height="14" fill="url(#dg)"/><rect x="179" y="61" width="4" height="14" fill="url(#dg)"/><rect x="189" y="61" width="4" height="14" fill="url(#dg)"/><rect x="199" y="61" width="4" height="14" fill="url(#dg)"/><rect x="209" y="61" width="4" height="14" fill="url(#dg)"/><rect x="219" y="61" width="4" height="14" fill="url(#dg)"/><rect x="229" y="61" width="4" height="14" fill="url(#dg)"/><rect x="239" y="61" width="4" height="14" fill="url(#dg)"/><rect x="249" y="61" width="4" height="14" fill="url(#dg)"/><rect x="259" y="61" width="4" height="14" fill="url(#dg)"/><rect x="269" y="61" width="4" height="14" fill="url(#dg)"/><rect x="279" y="61" width="4" height="14" fill="url(#dg)"/><rect x="289" y="61" width="4" height="14" fill="url(#dg)"/><rect x="299" y="61" width="4" height="14" fill="url(#dg)"/><rect x="309" y="61" width="4" height="14" fill="url(#dg)"/><rect x="319" y="61" width="4" height="14" fill="url(#dg)"/><rect x="329" y="61" width="4" height="14" fill="url(#dg)"/><rect x="339" y="61" width="4" height="14" fill="url(#dg)"/><rect x="349" y="61" width="4" height="14" fill="url(#dg)"/><rect x="359" y="61" width="4" height="14" fill="url(#dg)"/><rect x="369" y="61" width="4" height="14" fill="url(#dg)"/><rect x="379" y="61" width="4" height="14" fill="url(#dg)"/><rect x="389" y="61" width="4" height="14" fill="url(#dg)"/><rect x="399" y="61" width="4" height="14" fill="url(#dg)"/><rect x="409" y="61" width="4" height="14" fill="url(#dg)"/><rect x="419" y="61" width="4" height="14" fill="url(#dg)"/><rect x="429" y="61" width="4" height="14" fill="url(#dg)"/><rect x="439" y="61" width="4" height="14" fill="url(#dg)"/><rect x="449" y="61" width="4" height="14" fill="url(#dg)"/><rect x="459" y="61" width="4" height="14" fill="url(#dg)"/><rect x="469" y="61" width="4" height="14" fill="url(#dg)"/><rect x="479" y="61" width="4" height="14" fill="url(#dg)"/><rect x="489" y="61" width="4" height="14" fill="url(#dg)"/><rect x="499" y="61" width="4" height="14" fill="url(#dg)"/><rect x="509" y="61" width="4" height="14" fill="url(#dg)"/><rect x="519" y="61" width="4" height="14" fill="url(#dg)"/><rect x="529" y="61" width="4" height="14" fill="url(#dg)"/><rect x="539" y="61" width="4" height="14" fill="url(#dg)"/><rect x="549" y="61" width="4" height="14" fill="url(#dg)"/><rect x="559" y="61" width="4" height="14" fill="url(#dg)"/><rect x="569" y="61" width="4" height="14" fill="url(#dg)"/><rect x="579" y="61" width="4" height="14" fill="url(#dg)"/><rect x="589" y="61" width="4" height="14" fill="url(#dg)"/><rect x="599" y="61" width="4" height="14" fill="url(#dg)"/><rect x="609" y="61" width="4" height="14" fill="url(#dg)"/><rect x="619" y="61" width="4" height="14" fill="url(#dg)"/><rect x="629" y="61" width="4" height="14" fill="url(#dg)"/><rect x="639" y="61" width="4" height="14" fill="url(#dg)"/><rect x="649" y="61" width="4" height="14" fill="url(#dg)"/><rect x="659" y="61" width="4" height="14" fill="url(#dg)"/><rect x="669" y="61" width="4" height="14" fill="url(#dg)"/><rect x="679" y="61" width="4" height="14" fill="url(#dg)"/><path d="M3.5 74.5H8.5V60.5H13.5V74.5H18.5V60.5H23.5V74.5H28.5V60.5H33.5V74.5H38.5V60.5H43.5V74.5H48.5V60.5H53.5V74.5H58.5V60.5H63.5V74.5H68.5V60.5H73.5V74.5H78.5V60.5H83.5V74.5H88.5V60.5H93.5V74.5H98.5V60.5H103.5V74.5H108.5V60.5H113.5V74.5H118.5V60.5H123.5V74.5H128.5V60.5H133.5V74.5H138.5V60.5H143.5V74.5H148.5V60.5H153.5V74.5H158.5V60.5H163.5V74.5H168.5V60.5H173.5V74.5H178.5V60.5H183.5V74.5H188.5V60.5H193.5V74.5H198.5V60.5H203.5V74.5H208.5V60.5H213.5V74.5H218.5V60.5H223.5V74.5H228.5V60.5H233.5V74.5H238.5V60.5H243.5V74.5H248.5V60.5H253.5V74.5H258.5V60.5H263.5V74.5H268.5V60.5H273.5V74.5H278.5V60.5H283.5V74.5H288.5V60.5H293.5V74.5H298.5V60.5H303.5V74.5H308.5V60.5H313.5V74.5H318.5V60.5H323.5V74.5H328.5V60.5H333.5V74.5H338.5V60.5H343.5V74.5H348.5V60.5H353.5V74.5H358.5V60.5H363.5V74.5H368.5V60.5H373.5V74.5H378.5V60.5H383.5V74.5H388.5V60.5H393.5V74.5H398.5V60.5H403.5V74.5H408.5V60.5H413.5V74.5H418.5V60.5H423.5V74.5H428.5V60.5H433.5V74.5H438.5V60.5H443.5V74.5H448.5V60.5H453.5V74.5H458.5V60.5H463.5V74.5H468.5V60.5H473.5V74.5H478.5V60.5H483.5V74.5H488.5V60.5H493.5V74.5H498.5V60.5H503.5V74.5H508.5V60.5H513.5V74.5H518.5V60.5H523.5V74.5H528.5V60.5H533.5V74.5H538.5V60.5H543.5V74.5H548.5V60.5H553.5V74.5H558.5V60.5H563.5V74.5H568.5V60.5H573.5V74.5H578.5V60.5H583.5V74.5H588.5V60.5H593.5V74.5H598.5V60.5H603.5V74.5H608.5V60.5H613.5V74.5H618.5V60.5H623.5V74.5H628.5V60.5H633.5V74.5H638.5V60.5H643.5V74.5H648.5V60.5H653.5V74.5H658.5V60.5H663.5V74.5H668.5V60.5H673.5V74.5H678.5V60.5H683.5V74.5H687.5" fill="none" stroke="#00ff00" stroke-width="1" shape-rendering="crispEdges"/><rect x="24" y="81" width="663" height="15" fill="url(#dg)"/><path d="M3.5 94.5H23.5V80.5H687" fill="none" stroke="#00e000" stroke-width="1" shape-rendering="crispEdges"/><path d="M3 107.5L6 100.5H300L303 107.5M3 107.5L6 114.5H300L303 107.5M303 107.5L306 100.5H320L323 107.5M303 107.5L306 114.5H320L323 107.5M323 107.5L326 100.5H340L343 107.5M323 107.5L326 114.5H340L343 107.5M343 107.5L346 100.5H360L363 107.5M343 107.5L346 114.5H360L363 107.5M363 107.5L366 100.5H380L383 107.5M363 107.5L366 114.5H380L383 107.5M383 107.5L386 100.5H400L403 107.5M383 107.5L386 114.5H400L403 107.5M403 107.5L406 100.5H687M403 107.5L406 114.5H687" fill="none" stroke="#00ff00" stroke-width="2.2" stroke-linejoin="miter"/><path d="M3 127.5L6 120.5H687M3 127.5L6 134.5H687" fill="none" stroke="#00e400" stroke-width="1.2"/><rect x="3" y="140" width="6" height="15" fill="#00e000"/><path d="M9 147.5L12 140.5H25L28 147.5M9 147.5L12 154.5H25L28 147.5M28 147.5L31 140.5H35L38 147.5M28 147.5L31 154.5H35L38 147.5M38 147.5L41 140.5H45L48 147.5M38 147.5L41 154.5H45L48 147.5M48 147.5L51 140.5H55L58 147.5M48 147.5L51 154.5H55L58 147.5M58 147.5L61 140.5H65L68 147.5M58 147.5L61 154.5H65L68 147.5M68 147.5L71 140.5H75L78 147.5M68 147.5L71 154.5H75L78 147.5M78 147.5L81 140.5H85L88 147.5M78 147.5L81 154.5H85L88 147.5M88 147.5L91 140.5H95L98 147.5M88 147.5L91 154.5H95L98 147.5M98 147.5L101 140.5H105L108 147.5M98 147.5L101 154.5H105L108 147.5M108 147.5L111 140.5H115L118 147.5M108 147.5L111 154.5H115L118 147.5M118 147.5L121 140.5H125L128 147.5M118 147.5L121 154.5H125L128 147.5M128 147.5L131 140.5H135L138 147.5M128 147.5L131 154.5H135L138 147.5M138 147.5L141 140.5H145L148 147.5M138 147.5L141 154.5H145L148 147.5M148 147.5L151 140.5H155L158 147.5M148 147.5L151 154.5H155L158 147.5M158 147.5L161 140.5H165L168 147.5M158 147.5L161 154.5H165L168 147.5M168 147.5L171 140.5H175L178 147.5M168 147.5L171 154.5H175L178 147.5M178 147.5L181 140.5H185L188 147.5M178 147.5L181 154.5H185L188 147.5M188 147.5L191 140.5H195L198 147.5M188 147.5L191 154.5H195L198 147.5M198 147.5L201 140.5H205L208 147.5M198 147.5L201 154.5H205L208 147.5M208 147.5L211 140.5H215L218 147.5M208 147.5L211 154.5H215L218 147.5M218 147.5L221 140.5H225L228 147.5M218 147.5L221 154.5H225L228 147.5M228 147.5L231 140.5H235L238 147.5M228 147.5L231 154.5H235L238 147.5M238 147.5L241 140.5H245L248 147.5M238 147.5L241 154.5H245L248 147.5M248 147.5L251 140.5H255L258 147.5M248 147.5L251 154.5H255L258 147.5M258 147.5L261 140.5H265L268 147.5M258 147.5L261 154.5H265L268 147.5M268 147.5L271 140.5H275L278 147.5M268 147.5L271 154.5H275L278 147.5M278 147.5L281 140.5H285L288 147.5M278 147.5L281 154.5H285L288 147.5M288 147.5L291 140.5H295L298 147.5M288 147.5L291 154.5H295L298 147.5M298 147.5L301 140.5H305L308 147.5M298 147.5L301 154.5H305L308 147.5M308 147.5L311 140.5H345L348 147.5M308 147.5L311 154.5H345L348 147.5M348 147.5L351 140.5H365L368 147.5M348 147.5L351 154.5H365L368 147.5M368 147.5L371 140.5H375L378 147.5M368 147.5L371 154.5H375L378 147.5M378 147.5L381 140.5H405L408 147.5M378 147.5L381 154.5H405L408 147.5M408 147.5L411 140.5H415L418 147.5M408 147.5L411 154.5H415L418 147.5M418 147.5L421 140.5H425L428 147.5M418 147.5L421 154.5H425L428 147.5M428 147.5L431 140.5H435L438 147.5M428 147.5L431 154.5H435L438 147.5M438 147.5L441 140.5H445L448 147.5M438 147.5L441 154.5H445L448 147.5M448 147.5L451 140.5H455L458 147.5M448 147.5L451 154.5H455L458 147.5M458 147.5L461 140.5H465L468 147.5M458 147.5L461 154.5H465L468 147.5M468 147.5L471 140.5H475L478 147.5M468 147.5L471 154.5H475L478 147.5M478 147.5L481 140.5H485L488 147.5M478 147.5L481 154.5H485L488 147.5M488 147.5L491 140.5H495L498 147.5M488 147.5L491 154.5H495L498 147.5M498 147.5L501 140.5H505L508 147.5M498 147.5L501 154.5H505L508 147.5M508 147.5L511 140.5H515L518 147.5M508 147.5L511 154.5H515L518 147.5M518 147.5L521 140.5H525L528 147.5M518 147.5L521 154.5H525L528 147.5M528 147.5L531 140.5H535L538 147.5M528 147.5L531 154.5H535L538 147.5M538 147.5L541 140.5H545L548 147.5M538 147.5L541 154.5H545L548 147.5M548 147.5L551 140.5H555L558 147.5M548 147.5L551 154.5H555L558 147.5M558 147.5L561 140.5H565L568 147.5M558 147.5L561 154.5H565L568 147.5M568 147.5L571 140.5H575L578 147.5M568 147.5L571 154.5H575L578 147.5M578 147.5L581 140.5H585L588 147.5M578 147.5L581 154.5H585L588 147.5M588 147.5L591 140.5H595L598 147.5M588 147.5L591 154.5H595L598 147.5M598 147.5L601 140.5H605L608 147.5M598 147.5L601 154.5H605L608 147.5M608 147.5L611 140.5H615L618 147.5M608 147.5L611 154.5H615L618 147.5M618 147.5L621 140.5H625L628 147.5M618 147.5L621 154.5H625L628 147.5M628 147.5L631 140.5H635L638 147.5M628 147.5L631 154.5H635L638 147.5M638 147.5L641 140.5H645L648 147.5M638 147.5L641 154.5H645L648 147.5M648 147.5L651 140.5H655L658 147.5M648 147.5L651 154.5H655L658 147.5M658 147.5L661 140.5H665L668 147.5M658 147.5L661 154.5H665L668 147.5M668 147.5L671 140.5H675L678 147.5M668 147.5L671 154.5H675L678 147.5M678 147.5L681 140.5H687M678 147.5L681 154.5H687" fill="none" stroke="#00e400" stroke-width="1.1"/><path d="M3 167.5L6 160.5H687M3 167.5L6 174.5H687" fill="none" stroke="#00e400" stroke-width="1.2"/><path d="M3 187.5L6 180.5H300L303 187.5M3 187.5L6 194.5H300L303 187.5M303 187.5L306 180.5H320L323 187.5M303 187.5L306 194.5H320L323 187.5M323 187.5L326 180.5H340L343 187.5M323 187.5L326 194.5H340L343 187.5M343 187.5L346 180.5H360L363 187.5M343 187.5L346 194.5H360L363 187.5M363 187.5L366 180.5H380L383 187.5M363 187.5L366 194.5H380L383 187.5M383 187.5L386 180.5H400L403 187.5M383 187.5L386 194.5H400L403 187.5M403 187.5L406 180.5H687M403 187.5L406 194.5H687" fill="none" stroke="#00e400" stroke-width="1.2"/><rect x="8" y="15" width="2" height="582" fill="#ffff00"/></svg>
<div style="left:980px;top:87px;width:82px;height:12px;background:#ffff00;"></div>
<span class="m" style="left:982.5px;top:86.5px;height:13px;line-height:13px;font-size:11.67px;color:#000;">0.300000 us</span>
<span class="m" style="left:977.5px;top:121.5px;height:13px;line-height:13px;font-size:11.67px;color:#fff;">0 us</span>
<span class="m" style="left:1077.5px;top:121.5px;height:13px;line-height:13px;font-size:11.67px;color:#fff;">5 us</span>
<span class="m" style="left:1177.5px;top:121.5px;height:13px;line-height:13px;font-size:11.67px;color:#fff;">10 us</span>
<span class="m" style="left:1277.5px;top:121.5px;height:13px;line-height:13px;font-size:11.67px;color:#fff;">15 us</span>
<span class="m" style="left:1377.5px;top:121.5px;height:13px;line-height:13px;font-size:11.67px;color:#fff;">20 us</span>
<span class="m" style="left:1477.5px;top:121.5px;height:13px;line-height:13px;font-size:11.67px;color:#fff;">25 us</span>
<span class="m" style="left:1577.5px;top:121.5px;height:13px;line-height:13px;font-size:11.67px;color:#fff;">30 us</span>
<span class="m" style="left:1085px;top:184.5px;height:13px;line-height:13px;font-size:11.67px;color:#f4f4f4;width:80px;text-align:center;">1</span>
<span class="m" style="left:1477px;top:184.5px;height:13px;line-height:13px;font-size:11.67px;color:#f4f4f4;width:80px;text-align:center;">1</span>
<span class="m" style="left:1245px;top:184.5px;height:13px;line-height:13px;font-size:11.67px;color:#f4f4f4;width:80px;text-align:center;">2</span>
<span class="m" style="left:1265px;top:184.5px;height:13px;line-height:13px;font-size:11.67px;color:#f4f4f4;width:80px;text-align:center;">1</span>
<span class="m" style="left:1285px;top:184.5px;height:13px;line-height:13px;font-size:11.67px;color:#f4f4f4;width:80px;text-align:center;">3</span>
<span class="m" style="left:1305px;top:184.5px;height:13px;line-height:13px;font-size:11.67px;color:#f4f4f4;width:80px;text-align:center;">1</span>
<span class="m" style="left:1325px;top:184.5px;height:13px;line-height:13px;font-size:11.67px;color:#f4f4f4;width:80px;text-align:center;">0</span>
<span class="m" style="left:1085px;top:264.5px;height:13px;line-height:13px;font-size:11.67px;color:#f4f4f4;width:80px;text-align:center;">1</span>
<span class="m" style="left:1477px;top:264.5px;height:13px;line-height:13px;font-size:11.67px;color:#f4f4f4;width:80px;text-align:center;">1</span>
<span class="m" style="left:1245px;top:264.5px;height:13px;line-height:13px;font-size:11.67px;color:#f4f4f4;width:80px;text-align:center;">2</span>
<span class="m" style="left:1265px;top:264.5px;height:13px;line-height:13px;font-size:11.67px;color:#f4f4f4;width:80px;text-align:center;">1</span>
<span class="m" style="left:1285px;top:264.5px;height:13px;line-height:13px;font-size:11.67px;color:#f4f4f4;width:80px;text-align:center;">3</span>
<span class="m" style="left:1305px;top:264.5px;height:13px;line-height:13px;font-size:11.67px;color:#f4f4f4;width:80px;text-align:center;">1</span>
<span class="m" style="left:1325px;top:264.5px;height:13px;line-height:13px;font-size:11.67px;color:#f4f4f4;width:80px;text-align:center;">0</span>
<span class="m" style="left:1277px;top:204.5px;height:13px;line-height:13px;font-size:11.67px;color:#f4f4f4;width:80px;text-align:center;">e</span>
<span class="m" style="left:949.5px;top:224.5px;height:13px;line-height:13px;font-size:11.67px;color:#f4f4f4;width:80px;text-align:center;">0</span>
<span class="m" style="left:1260px;top:224.5px;height:13px;line-height:13px;font-size:11.67px;color:#f4f4f4;width:80px;text-align:center;">e</span>
<span class="m" style="left:1290px;top:224.5px;height:13px;line-height:13px;font-size:11.67px;color:#f4f4f4;width:80px;text-align:center;">0</span>
<span class="m" style="left:1325px;top:224.5px;height:13px;line-height:13px;font-size:11.67px;color:#f4f4f4;width:80px;text-align:center;">2</span>
<span class="m" style="left:1277px;top:244.5px;height:13px;line-height:13px;font-size:11.67px;color:#f4f4f4;width:80px;text-align:center;">500000 ps</span>
<div style="left:211px;top:738px;width:1465px;height:29px;background:linear-gradient(#fafafa 0,#f4f4f4 30%,#e6e6e6 100%);"></div>
<div style="left:928px;top:740px;width:2px;height:2px;background:#767676;"></div>
<div style="left:932px;top:740px;width:2px;height:2px;background:#767676;"></div>
<div style="left:936px;top:740px;width:2px;height:2px;background:#767676;"></div>
<div style="left:940px;top:740px;width:2px;height:2px;background:#767676;"></div>
<div style="left:944px;top:740px;width:2px;height:2px;background:#767676;"></div>
<div style="left:948px;top:740px;width:2px;height:2px;background:#767676;"></div>
<div style="left:952px;top:740px;width:2px;height:2px;background:#767676;"></div>
<div style="left:956px;top:740px;width:2px;height:2px;background:#767676;"></div>
<div style="left:960px;top:740px;width:2px;height:2px;background:#767676;"></div>
<span class="t" style="left:222px;top:749.0px;height:14px;line-height:14px;font-size:11px;letter-spacing:-0.368px;">Tcl Console</span>
<span class="t" style="left:1581px;top:749.0px;height:14px;line-height:14px;font-size:12px;letter-spacing:-0.320px;">?</span>
<div style="left:1595px;top:759px;width:10px;height:2px;background:#222;"></div>
<div style="left:1614px;top:752px;width:10px;height:9px;border:1px solid #222;border-top-width:1.5px;"></div>
<svg style="left:1634px;top:751px" width="11" height="11" viewBox="0 0 11 11" ><path d="M1.5 3.5V9.5H8.5V7" fill="none" stroke="#222" stroke-width="1"/><path d="M4 7L9.5 1.5" stroke="#222" stroke-width="1.2"/><path d="M6 1h4.2v4.2z" fill="#222"/></svg>
<svg style="left:1654.5px;top:752px" width="9" height="9" viewBox="0 0 9 9" ><path d="M0.7 0.7L8.3 8.3M8.3 0.7L0.7 8.3" stroke="#222" stroke-width="1.1"/></svg>
<div style="left:240px;top:766px;width:1427px;height:104px;background:#fff;border:1px solid #b0b0b0;border-bottom:none;"></div>
<div style="left:241px;top:767px;width:24px;height:103px;background:#f6f6f6;"></div>
<div style="left:1652px;top:767px;width:14px;height:103px;background:#f1f1f1;border-left:1px solid #dcdcdc;"></div>
<svg style="left:1655px;top:771px" width="9" height="7" viewBox="0 0 9 7" ><path d="M0.5 5.5H8.5L4.5 1z" fill="#444"/><path d="M0 6H9" stroke="#999" stroke-width="0.7"/></svg>
<svg style="left:1655px;top:865px" width="9" height="6" viewBox="0 0 9 6" ><path d="M0.5 1H8.5L4.5 5.5z" fill="#444"/><path d="M0 0.6H9" stroke="#999" stroke-width="0.7"/></svg>
<div style="left:1652.5px;top:840px;width:12.5px;height:20px;background:linear-gradient(90deg,#ececec,#d0d0d6);border:1px solid #9a9a9a;border-radius:2px;"></div>
<div style="left:1655px;top:847px;width:7px;height:1px;background:#555;"></div>
<div style="left:1655px;top:850px;width:7px;height:1px;background:#555;"></div>
<div style="left:1655px;top:853px;width:7px;height:1px;background:#555;"></div>
<div style="left:265px;top:767px;width:1px;height:103px;background:repeating-linear-gradient(#999 0 1px,transparent 1px 2px);"></div>
<span class="m" style="left:272.5px;top:769.5px;height:14px;line-height:14px;font-size:11.67px;color:#0808f8;">restart</span>
<span class="m" style="left:272.5px;top:786.5px;height:14px;line-height:14px;font-size:11.67px;color:#111;">INFO: [Simtcl 6-17] Simulation restarted</span>
<span class="m" style="left:272.5px;top:803.5px;height:14px;line-height:14px;font-size:11.67px;color:#0808f8;">run 100 us</span>
<span class="m" style="left:272.5px;top:820.5px;height:14px;line-height:14px;font-size:11.67px;color:#0808f8;">run 100 us</span>
<span class="m" style="left:272.5px;top:837.5px;height:14px;line-height:14px;font-size:11.67px;color:#0808f8;">run 100 us</span>
<svg style="left:260.5px;top:770.5px" width="11" height="12" viewBox="0 0 11 12" ><path d="M1 0.5H9.5V6.5L5.2 10.5L1 6.5z" fill="#fff" stroke="#a8a8a8"/><path d="M3.2 3.8H7.2" stroke="#888"/></svg>
<svg style="left:260.5px;top:788.5px" width="11" height="12" viewBox="0 0 11 12" ><path d="M1 10.8H9.5V4.8L5.2 0.8L1 4.8z" fill="#fff" stroke="#a8a8a8"/><path d="M3.2 7.5H7.2" stroke="#888"/></svg>
<svg width="0" height="0" style="left:0;top:0"><defs>
<linearGradient id="gFold" x1="0" y1="0" x2="0" y2="1"><stop offset="0" stop-color="#fff6c0"/><stop offset="1" stop-color="#f3c94a"/></linearGradient>
<linearGradient id="gGreen" x1="0" y1="0" x2="1" y2="1"><stop offset="0" stop-color="#8ef07a"/><stop offset="1" stop-color="#17a417"/></linearGradient>
<linearGradient id="gBlue" x1="0" y1="0" x2="1" y2="1"><stop offset="0" stop-color="#7cc4ff"/><stop offset="1" stop-color="#1d63c8"/></linearGradient>
<radialGradient id="gBall" cx="0.35" cy="0.35" r="0.7"><stop offset="0" stop-color="#cfe6ff"/><stop offset="1" stop-color="#3b7ad6"/></radialGradient>
<radialGradient id="gLens" cx="0.4" cy="0.35" r="0.7"><stop offset="0" stop-color="#e8f6ff"/><stop offset="1" stop-color="#6bb2f0"/></radialGradient>
<radialGradient id="gOr" cx="0.4" cy="0.35" r="0.7"><stop offset="0" stop-color="#ffe680"/><stop offset="1" stop-color="#e8891a"/></radialGradient>
<linearGradient id="gChip" x1="0" y1="0" x2="1" y2="1"><stop offset="0" stop-color="#b9cdea"/><stop offset="1" stop-color="#5277b8"/></linearGradient>
<linearGradient id="gChipO" x1="0" y1="0" x2="1" y2="1"><stop offset="0" stop-color="#f8b070"/><stop offset="1" stop-color="#c9540e"/></linearGradient>
<linearGradient id="gYel" x1="0" y1="0" x2="0" y2="1"><stop offset="0" stop-color="#fff3a0"/><stop offset="1" stop-color="#e0a800"/></linearGradient>
</defs></svg>
<svg style="left:8px;top:6px" width="20" height="20" viewBox="0 0 20 20" ><path d="M0.7 14.5V3.5H5.5L7 5H13V14.5z" fill="#f7dc7a" stroke="#b78a2a" stroke-width="0.9"/><path d="M0.7 14.5L3.5 7.5H15.5L13 14.5z" fill="url(#gFold)" stroke="#b78a2a" stroke-width="0.9"/><path d="M9.5 1.2C13 0.8 14.2 2.5 14 5.2H16.2L12.8 9L9.4 5.2H11.5C11.6 3.6 11 2.8 9.5 2.9z" fill="#2fc32f" stroke="#0e8a0e" stroke-width="0.6"/><path d="M19.5 14.5V19H15z" fill="#222"/></svg>
<svg style="left:38px;top:8px" width="16" height="12" viewBox="0 0 16 12" ><path d="M0 2V11.9H9.2L6.6 9.2C7.6 8.2 9.2 8.4 9.6 9.4C10 10.6 9 11.9 7.6 11.9H13.6C16.4 9.6 16.3 4.6 13.4 2.2C10.4 -0.2 6.2 0.4 3.6 3.8z" fill="#8e8e8e"/></svg>
<svg style="left:62px;top:8px" width="16" height="12" viewBox="0 0 16 12" ><g transform="translate(16,0) scale(-1,1)"><path d="M0 2V11.9H9.2L6.6 9.2C7.6 8.2 9.2 8.4 9.6 9.4C10 10.6 9 11.9 7.6 11.9H13.6C16.4 9.6 16.3 4.6 13.4 2.2C10.4 -0.2 6.2 0.4 3.6 3.8z" fill="#8e8e8e"/></g></svg>
<svg style="left:86px;top:6px" width="17" height="16" viewBox="0 0 17 16" ><path d="M0.5 0.5H7L10 3.5V11.5H0.5z" fill="#fff" stroke="#7f9fd6"/><path d="M2 4.5H7M2 6.5H8M2 8.5H8" stroke="#9db8e8" stroke-width="0.9"/><path d="M5.5 3.5H12.5L16 7V15.5H5.5z" fill="#fff" stroke="#3f6fd0"/><path d="M12.5 3.5V7H16" fill="none" stroke="#3f6fd0"/><path d="M7.5 9.5H14M7.5 11.5H14M7.5 13.5H14" stroke="#4a7fe0" stroke-width="1"/></svg>
<svg style="left:110px;top:6px" width="17" height="16" viewBox="0 0 17 16" ><path d="M0 2H4V0H9V2H11V5L16 9V16H6V13H0z" fill="#8e8e8e"/></svg>
<svg style="left:136px;top:8px" width="12" height="12" viewBox="0 0 12 12" ><path d="M1.2 1.2L10.8 10.8M10.8 1.2L1.2 10.8" stroke="#8e8e8e" stroke-width="2.4"/></svg>
<svg style="left:163px;top:6px" width="17" height="16" viewBox="0 0 17 16" ><path d="M3.5 0.8L16 8L3.5 15.2z" fill="#24b424" stroke="#0c800c" stroke-width="0.7"/><circle cx="4.2" cy="4.8" r="2.7" fill="url(#gBall)" stroke="#2d5fb0" stroke-width="0.5"/><circle cx="7.6" cy="8" r="2.7" fill="url(#gBall)" stroke="#2d5fb0" stroke-width="0.5"/><circle cx="4.2" cy="11.2" r="2.7" fill="url(#gBall)" stroke="#2d5fb0" stroke-width="0.5"/></svg>
<svg style="left:190px;top:6px" width="12" height="16" viewBox="0 0 12 16" ><path d="M1 1L11 8L1 15z" fill="url(#gGreen)" stroke="#129012" stroke-width="1"/></svg>
<svg style="left:211px;top:6px" width="17" height="16" viewBox="0 0 17 16" ><path d="M5.5 3.5H13L16 6.5V15.5H5.5z" fill="#e8f1ff" stroke="#7f9fd6"/><path d="M13 3.5V6.5H16" fill="none" stroke="#7f9fd6"/><text x="6.6" y="13.8" font-size="5.6" font-family="Liberation Sans" font-weight="bold" fill="#3f6fd0" letter-spacing="-0.2">101</text><path d="M3 0.5H7V4H9.8L5 9L0.2 4H3z" fill="#2fc32f" stroke="#0e8a0e" stroke-width="0.6"/></svg>
<svg style="left:240px;top:6px" width="16" height="16" viewBox="0 0 16 16" ><polygon points="14.30,7.00 14.25,7.82 12.27,8.20 12.10,8.78 13.58,10.17 13.18,10.88 11.22,10.37 10.82,10.82 11.55,12.71 10.88,13.18 9.34,11.87 8.78,12.10 8.62,14.12 7.82,14.25 7.00,12.40 6.40,12.37 5.38,14.12 4.59,13.89 4.66,11.87 4.13,11.57 2.45,12.71 1.84,12.16 2.78,10.37 2.43,9.87 0.42,10.17 0.11,9.41 1.73,8.20 1.63,7.60 -0.30,7.00 -0.25,6.18 1.73,5.80 1.90,5.22 0.42,3.83 0.82,3.12 2.78,3.63 3.18,3.18 2.45,1.29 3.12,0.82 4.66,2.13 5.22,1.90 5.38,-0.12 6.18,-0.25 7.00,1.60 7.60,1.63 8.62,-0.12 9.41,0.11 9.34,2.13 9.87,2.43 11.55,1.29 12.16,1.84 11.22,3.63 11.57,4.13 13.58,3.83 13.89,4.59 12.27,5.80 12.37,6.40" fill="#525f72"/><circle cx="7" cy="7" r="4.3" fill="#c4ccd6"/><circle cx="7" cy="7" r="4.3" fill="none" stroke="#46525f" stroke-width="0.7"/><path d="M7 2.8V7L3.4 9.2M7 7L10.6 9.2" stroke="#4f5a66" stroke-width="1" fill="none"/><circle cx="7" cy="7" r="1.5" fill="#3f4852"/><polygon points="15.90,11.40 15.81,12.32 14.41,12.73 14.09,13.33 14.52,14.72 13.81,15.31 12.53,14.61 11.88,14.81 11.20,16.10 10.28,16.01 9.87,14.61 9.27,14.29 7.88,14.72 7.29,14.01 7.99,12.73 7.79,12.08 6.50,11.40 6.59,10.48 7.99,10.07 8.31,9.47 7.88,8.08 8.59,7.49 9.87,8.19 10.52,7.99 11.20,6.70 12.12,6.79 12.53,8.19 13.13,8.51 14.52,8.08 15.11,8.79 14.41,10.07 14.61,10.72" fill="url(#gOr)" stroke="#c47a10" stroke-width="0.6"/><circle cx="11.2" cy="11.4" r="1.41" fill="#c4501a"/></svg>
<svg style="left:264px;top:6px" width="17" height="16" viewBox="0 0 17 16" ><path d="M14.5 1.5L6 10" stroke="#5a6068" stroke-width="1.6"/><path d="M6.5 9L3 12.8C2 14 3.5 15.5 4.6 14.4L8 11z" fill="#f39a1e" stroke="#b8650a" stroke-width="0.5"/><path d="M1.2 3.2C0.8 1.5 2.5 0 4.3 0.6L2.8 2.3L4.2 3.8L6 2.4C6.5 4 5.3 5.8 3.6 5.6z" fill="#6aa4e8" stroke="#2f62b5" stroke-width="0.5"/><path d="M4.5 4.5L13.5 13.5" stroke="#3f78c8" stroke-width="2.4"/><path d="M10 10L14.5 14.5" stroke="#2a5aa8" stroke-width="3" stroke-linecap="round"/></svg>
<svg style="left:293px;top:6px" width="15" height="16" viewBox="0 0 15 16" ><path d="M0.8 0.8H14V4H12.5L12 2.8H5.2L9.6 8L5 13H12.2L12.8 11.6H14.2V15.2H0.8V13.6L6 8L0.8 2.4z" fill="#2cc42c" stroke="#0b860b" stroke-width="0.7"/></svg>
<svg style="left:317px;top:6px" width="17" height="16" viewBox="0 0 17 16" ><rect x="0.5" y="0.5" width="12" height="11" fill="#fafcff" stroke="#8aa6dc"/><polygon points="15.70,9.50 15.61,10.58 13.81,11.07 13.47,11.79 14.25,13.49 13.49,14.25 11.79,13.47 11.07,13.81 10.58,15.61 9.50,15.70 8.70,14.02 7.93,13.81 6.40,14.87 5.51,14.25 5.99,12.45 5.53,11.79 3.67,11.62 3.39,10.58 4.91,9.50 4.98,8.70 3.67,7.38 4.13,6.40 5.99,6.55 6.55,5.99 6.40,4.13 7.38,3.67 8.70,4.98 9.50,4.91 10.58,3.39 11.62,3.67 11.79,5.53 12.45,5.99 14.25,5.51 14.87,6.40 13.81,7.93 14.02,8.70" fill="url(#gOr)" stroke="#c98a10" stroke-width="0.6"/><circle cx="9.5" cy="9.5" r="1.36" fill="#a8741a"/></svg>
<svg style="left:346px;top:8px" width="12" height="12" viewBox="0 0 12 12" ><rect x="0.5" y="0.5" width="3" height="5" fill="#eaf4ff" stroke="#4d7fd0"/><rect x="5.5" y="0.5" width="6" height="5" fill="#d6ebff" stroke="#4d7fd0"/><rect x="5.5" y="2.2" width="6" height="0.9" fill="#4d7fd0"/><rect x="0.5" y="7.5" width="11" height="4" fill="#bfe4ff" stroke="#4d7fd0"/></svg>
<svg style="left:506px;top:2px" width="76" height="24" viewBox="0 0 76 24" ><path d="M5.4 4.3L19.5 18.6" stroke="#8e8e8e" stroke-width="1.1"/><path d="M20 4.3L15 4.5L10.4 6.8L7.3 8.6L6.8 13.6L5.2 17.7L8.6 18.6L13.6 15.4L17.2 10.9z" fill="#8e8e8e"/><path d="M30.2 5L43.5 18.6" stroke="#8e8e8e" stroke-width="1.1"/><path d="M36.7 4.3L44.9 12.2L37 19.5L29 12z" fill="#8e8e8e"/><path d="M57.4 4.3V15.4L59.2 13.6L63.5 19L65.3 18.1L62.1 12.7L65.3 11.3z" fill="#f8d860" stroke="#c8780a" stroke-width="0.9"/><path d="M53.3 3.9L68.7 19.5" stroke="#3a4450" stroke-width="1.1"/></svg>
<svg style="left:588px;top:6px" width="17" height="16" viewBox="0 0 17 16" ><rect x="0.8" y="1" width="2.6" height="14" fill="#2d6fd2"/><path d="M10 1L3.6 8L10 15z" fill="url(#gBlue)" stroke="#2d6fd2" stroke-width="0.6"/><path d="M16.2 1L9.8 8L16.2 15z" fill="url(#gBlue)" stroke="#2d6fd2" stroke-width="0.6"/></svg>
<svg style="left:612px;top:6px" width="17" height="16" viewBox="0 0 17 16" ><path d="M0.6 0.6L10.5 8L0.6 15.4z" fill="url(#gBlue)" stroke="#2d6fd2" stroke-width="0.7"/><path d="M3.5 15.5V12.5H6.5V15.5H9.5V12.5H12.5V15.5H15.5V12" fill="none" stroke="#000" stroke-width="1.1"/></svg>
<svg style="left:636px;top:7px" width="18" height="14" viewBox="0 0 18 14" ><path d="M0.7 1L6 6.8L0.7 12.6z" fill="#6ab8ff" stroke="#2d6fd2" stroke-width="1"/><text x="7.2" y="9.8" font-size="8.3" font-family="Liberation Sans" fill="#1a4cc0" stroke="#1a4cc0" stroke-width="0.25">(T)</text></svg>
<svg style="left:747px;top:8px" width="17" height="13" viewBox="0 0 17 13" ><rect x="10" y="1" width="6" height="2.2" fill="#3a86e0"/><rect x="11" y="5.2" width="5" height="2.2" fill="#3a86e0"/><rect x="10" y="9.4" width="6" height="2.2" fill="#3a86e0"/><path d="M1 1H3.8V5H7.5V2.8L11 6.3L7.5 9.8V7.6H1z" fill="#f3d030" stroke="#a8860a" stroke-width="0.7"/></svg>
<div style="left:773px;top:7px;width:5px;height:14px;background:#8e8e8e;"></div>
<div style="left:780px;top:7px;width:5px;height:14px;background:#8e8e8e;"></div>
<svg style="left:796px;top:8px" width="15" height="13" viewBox="0 0 15 13" ><path d="M3.5 10.5H3C1.5 10.5 1 9.5 1 8.5V3.5C1 2 2 1.2 3.2 1.2H11.5C13 1.2 13.8 2 13.8 3.5V8.5" fill="none" stroke="#3a86e0" stroke-width="2"/><path d="M11 7.2V12.4H5.8z" fill="#3a86e0" transform="rotate(45 8.5 10)"/><path d="M4.5 10.2L8.5 7V9H13.8V11.4H8.5V13.2z" fill="#3a86e0"/></svg>
<svg style="left:824px;top:6px" width="17" height="16" viewBox="0 0 17 16" ><path d="M8 0.8C12.5 0.8 15.6 3.3 15.6 6.6C15.6 9 14 10.8 12 11.6L12.8 15L9.5 12.4C4.5 13 0.8 10.5 0.8 6.6C0.8 3.3 3.5 0.8 8 0.8z" fill="#fff" stroke="#4a78c8" stroke-width="1"/><path d="M4.2 3H11V5.2H9.8L9.5 4.4H7L9.4 6.8L7 9.4H9.6L10 8.4H11.2V10.8H4.2V9.6L6.8 6.8L4.2 4.2z" fill="#e0202a"/></svg>
<svg style="left:9.2px;top:58px" width="16" height="15" viewBox="0 0 16 15" ><path d="M9 9L14.4 14" stroke="#b8321c" stroke-width="2.2" stroke-linecap="round"/><circle cx="5.6" cy="5.4" r="4.5" fill="url(#gLens)" stroke="#5a8fd8" stroke-width="1.3"/></svg>
<svg style="left:32px;top:58px" width="15" height="15" viewBox="0 0 15 15" preserveAspectRatio="none"><rect x="0.6" y="0.6" width="13.8" height="3.8" fill="#fdeab0" stroke="#d08418" stroke-width="1"/><rect x="0.6" y="10.6" width="13.8" height="3.8" fill="#fdeab0" stroke="#d08418" stroke-width="1"/><path d="M3.2 2.2H11.8L7.5 6.9z" fill="#35cf35" stroke="#0c8a0c" stroke-width="0.7"/><path d="M3.2 12.8H11.8L7.5 8.1z" fill="#35cf35" stroke="#0c8a0c" stroke-width="0.7"/></svg>
<svg style="left:54px;top:58px" width="15" height="15" viewBox="0 0 15 15" preserveAspectRatio="none"><rect x="0.6" y="2.6" width="13.8" height="3.8" fill="#fdeab0" stroke="#d08418" stroke-width="1"/><rect x="0.6" y="8.6" width="13.8" height="3.8" fill="#fdeab0" stroke="#d08418" stroke-width="1"/><path d="M3.6 4.6H11.4L7.5 0.4z" fill="#35cf35" stroke="#0c8a0c" stroke-width="0.7"/><path d="M3.6 10.4H11.4L7.5 14.6z" fill="#35cf35" stroke="#0c8a0c" stroke-width="0.7"/></svg>
<svg style="left:46px;top:115px" width="16" height="16" viewBox="0 0 16 16" ><polygon points="14.30,7.00 14.25,7.82 12.27,8.20 12.10,8.78 13.58,10.17 13.18,10.88 11.22,10.37 10.82,10.82 11.55,12.71 10.88,13.18 9.34,11.87 8.78,12.10 8.62,14.12 7.82,14.25 7.00,12.40 6.40,12.37 5.38,14.12 4.59,13.89 4.66,11.87 4.13,11.57 2.45,12.71 1.84,12.16 2.78,10.37 2.43,9.87 0.42,10.17 0.11,9.41 1.73,8.20 1.63,7.60 -0.30,7.00 -0.25,6.18 1.73,5.80 1.90,5.22 0.42,3.83 0.82,3.12 2.78,3.63 3.18,3.18 2.45,1.29 3.12,0.82 4.66,2.13 5.22,1.90 5.38,-0.12 6.18,-0.25 7.00,1.60 7.60,1.63 8.62,-0.12 9.41,0.11 9.34,2.13 9.87,2.43 11.55,1.29 12.16,1.84 11.22,3.63 11.57,4.13 13.58,3.83 13.89,4.59 12.27,5.80 12.37,6.40" fill="#525f72"/><circle cx="7" cy="7" r="4.3" fill="#c4ccd6"/><circle cx="7" cy="7" r="4.3" fill="none" stroke="#46525f" stroke-width="0.7"/><path d="M7 2.8V7L3.4 9.2M7 7L10.6 9.2" stroke="#4f5a66" stroke-width="1" fill="none"/><circle cx="7" cy="7" r="1.5" fill="#3f4852"/><polygon points="15.90,11.40 15.81,12.32 14.41,12.73 14.09,13.33 14.52,14.72 13.81,15.31 12.53,14.61 11.88,14.81 11.20,16.10 10.28,16.01 9.87,14.61 9.27,14.29 7.88,14.72 7.29,14.01 7.99,12.73 7.79,12.08 6.50,11.40 6.59,10.48 7.99,10.07 8.31,9.47 7.88,8.08 8.59,7.49 9.87,8.19 10.52,7.99 11.20,6.70 12.12,6.79 12.53,8.19 13.13,8.51 14.52,8.08 15.11,8.79 14.41,10.07 14.61,10.72" fill="url(#gOr)" stroke="#c47a10" stroke-width="0.6"/><circle cx="11.2" cy="11.4" r="1.41" fill="#c4501a"/></svg>
<svg style="left:46px;top:335px" width="16" height="16" viewBox="0 0 16 16" ><polygon points="14.30,7.00 14.25,7.82 12.27,8.20 12.10,8.78 13.58,10.17 13.18,10.88 11.22,10.37 10.82,10.82 11.55,12.71 10.88,13.18 9.34,11.87 8.78,12.10 8.62,14.12 7.82,14.25 7.00,12.40 6.40,12.37 5.38,14.12 4.59,13.89 4.66,11.87 4.13,11.57 2.45,12.71 1.84,12.16 2.78,10.37 2.43,9.87 0.42,10.17 0.11,9.41 1.73,8.20 1.63,7.60 -0.30,7.00 -0.25,6.18 1.73,5.80 1.90,5.22 0.42,3.83 0.82,3.12 2.78,3.63 3.18,3.18 2.45,1.29 3.12,0.82 4.66,2.13 5.22,1.90 5.38,-0.12 6.18,-0.25 7.00,1.60 7.60,1.63 8.62,-0.12 9.41,0.11 9.34,2.13 9.87,2.43 11.55,1.29 12.16,1.84 11.22,3.63 11.57,4.13 13.58,3.83 13.89,4.59 12.27,5.80 12.37,6.40" fill="#525f72"/><circle cx="7" cy="7" r="4.3" fill="#c4ccd6"/><circle cx="7" cy="7" r="4.3" fill="none" stroke="#46525f" stroke-width="0.7"/><path d="M7 2.8V7L3.4 9.2M7 7L10.6 9.2" stroke="#4f5a66" stroke-width="1" fill="none"/><circle cx="7" cy="7" r="1.5" fill="#3f4852"/><polygon points="15.90,11.40 15.81,12.32 14.41,12.73 14.09,13.33 14.52,14.72 13.81,15.31 12.53,14.61 11.88,14.81 11.20,16.10 10.28,16.01 9.87,14.61 9.27,14.29 7.88,14.72 7.29,14.01 7.99,12.73 7.79,12.08 6.50,11.40 6.59,10.48 7.99,10.07 8.31,9.47 7.88,8.08 8.59,7.49 9.87,8.19 10.52,7.99 11.20,6.70 12.12,6.79 12.53,8.19 13.13,8.51 14.52,8.08 15.11,8.79 14.41,10.07 14.61,10.72" fill="url(#gOr)" stroke="#c47a10" stroke-width="0.6"/><circle cx="11.2" cy="11.4" r="1.41" fill="#c4501a"/></svg>
<svg style="left:46px;top:412px" width="16" height="16" viewBox="0 0 16 16" ><polygon points="14.30,7.00 14.25,7.82 12.27,8.20 12.10,8.78 13.58,10.17 13.18,10.88 11.22,10.37 10.82,10.82 11.55,12.71 10.88,13.18 9.34,11.87 8.78,12.10 8.62,14.12 7.82,14.25 7.00,12.40 6.40,12.37 5.38,14.12 4.59,13.89 4.66,11.87 4.13,11.57 2.45,12.71 1.84,12.16 2.78,10.37 2.43,9.87 0.42,10.17 0.11,9.41 1.73,8.20 1.63,7.60 -0.30,7.00 -0.25,6.18 1.73,5.80 1.90,5.22 0.42,3.83 0.82,3.12 2.78,3.63 3.18,3.18 2.45,1.29 3.12,0.82 4.66,2.13 5.22,1.90 5.38,-0.12 6.18,-0.25 7.00,1.60 7.60,1.63 8.62,-0.12 9.41,0.11 9.34,2.13 9.87,2.43 11.55,1.29 12.16,1.84 11.22,3.63 11.57,4.13 13.58,3.83 13.89,4.59 12.27,5.80 12.37,6.40" fill="#525f72"/><circle cx="7" cy="7" r="4.3" fill="#c4ccd6"/><circle cx="7" cy="7" r="4.3" fill="none" stroke="#46525f" stroke-width="0.7"/><path d="M7 2.8V7L3.4 9.2M7 7L10.6 9.2" stroke="#4f5a66" stroke-width="1" fill="none"/><circle cx="7" cy="7" r="1.5" fill="#3f4852"/><polygon points="15.90,11.40 15.81,12.32 14.41,12.73 14.09,13.33 14.52,14.72 13.81,15.31 12.53,14.61 11.88,14.81 11.20,16.10 10.28,16.01 9.87,14.61 9.27,14.29 7.88,14.72 7.29,14.01 7.99,12.73 7.79,12.08 6.50,11.40 6.59,10.48 7.99,10.07 8.31,9.47 7.88,8.08 8.59,7.49 9.87,8.19 10.52,7.99 11.20,6.70 12.12,6.79 12.53,8.19 13.13,8.51 14.52,8.08 15.11,8.79 14.41,10.07 14.61,10.72" fill="url(#gOr)" stroke="#c47a10" stroke-width="0.6"/><circle cx="11.2" cy="11.4" r="1.41" fill="#c4501a"/></svg>
<svg style="left:46px;top:489px" width="16" height="16" viewBox="0 0 16 16" ><polygon points="14.30,7.00 14.25,7.82 12.27,8.20 12.10,8.78 13.58,10.17 13.18,10.88 11.22,10.37 10.82,10.82 11.55,12.71 10.88,13.18 9.34,11.87 8.78,12.10 8.62,14.12 7.82,14.25 7.00,12.40 6.40,12.37 5.38,14.12 4.59,13.89 4.66,11.87 4.13,11.57 2.45,12.71 1.84,12.16 2.78,10.37 2.43,9.87 0.42,10.17 0.11,9.41 1.73,8.20 1.63,7.60 -0.30,7.00 -0.25,6.18 1.73,5.80 1.90,5.22 0.42,3.83 0.82,3.12 2.78,3.63 3.18,3.18 2.45,1.29 3.12,0.82 4.66,2.13 5.22,1.90 5.38,-0.12 6.18,-0.25 7.00,1.60 7.60,1.63 8.62,-0.12 9.41,0.11 9.34,2.13 9.87,2.43 11.55,1.29 12.16,1.84 11.22,3.63 11.57,4.13 13.58,3.83 13.89,4.59 12.27,5.80 12.37,6.40" fill="#525f72"/><circle cx="7" cy="7" r="4.3" fill="#c4ccd6"/><circle cx="7" cy="7" r="4.3" fill="none" stroke="#46525f" stroke-width="0.7"/><path d="M7 2.8V7L3.4 9.2M7 7L10.6 9.2" stroke="#4f5a66" stroke-width="1" fill="none"/><circle cx="7" cy="7" r="1.5" fill="#3f4852"/><polygon points="15.90,11.40 15.81,12.32 14.41,12.73 14.09,13.33 14.52,14.72 13.81,15.31 12.53,14.61 11.88,14.81 11.20,16.10 10.28,16.01 9.87,14.61 9.27,14.29 7.88,14.72 7.29,14.01 7.99,12.73 7.79,12.08 6.50,11.40 6.59,10.48 7.99,10.07 8.31,9.47 7.88,8.08 8.59,7.49 9.87,8.19 10.52,7.99 11.20,6.70 12.12,6.79 12.53,8.19 13.13,8.51 14.52,8.08 15.11,8.79 14.41,10.07 14.61,10.72" fill="url(#gOr)" stroke="#c47a10" stroke-width="0.6"/><circle cx="11.2" cy="11.4" r="1.41" fill="#c4501a"/></svg>
<svg style="left:46px;top:588px" width="16" height="16" viewBox="0 0 16 16" ><polygon points="14.30,7.00 14.25,7.82 12.27,8.20 12.10,8.78 13.58,10.17 13.18,10.88 11.22,10.37 10.82,10.82 11.55,12.71 10.88,13.18 9.34,11.87 8.78,12.10 8.62,14.12 7.82,14.25 7.00,12.40 6.40,12.37 5.38,14.12 4.59,13.89 4.66,11.87 4.13,11.57 2.45,12.71 1.84,12.16 2.78,10.37 2.43,9.87 0.42,10.17 0.11,9.41 1.73,8.20 1.63,7.60 -0.30,7.00 -0.25,6.18 1.73,5.80 1.90,5.22 0.42,3.83 0.82,3.12 2.78,3.63 3.18,3.18 2.45,1.29 3.12,0.82 4.66,2.13 5.22,1.90 5.38,-0.12 6.18,-0.25 7.00,1.60 7.60,1.63 8.62,-0.12 9.41,0.11 9.34,2.13 9.87,2.43 11.55,1.29 12.16,1.84 11.22,3.63 11.57,4.13 13.58,3.83 13.89,4.59 12.27,5.80 12.37,6.40" fill="#525f72"/><circle cx="7" cy="7" r="4.3" fill="#c4ccd6"/><circle cx="7" cy="7" r="4.3" fill="none" stroke="#46525f" stroke-width="0.7"/><path d="M7 2.8V7L3.4 9.2M7 7L10.6 9.2" stroke="#4f5a66" stroke-width="1" fill="none"/><circle cx="7" cy="7" r="1.5" fill="#3f4852"/><polygon points="15.90,11.40 15.81,12.32 14.41,12.73 14.09,13.33 14.52,14.72 13.81,15.31 12.53,14.61 11.88,14.81 11.20,16.10 10.28,16.01 9.87,14.61 9.27,14.29 7.88,14.72 7.29,14.01 7.99,12.73 7.79,12.08 6.50,11.40 6.59,10.48 7.99,10.07 8.31,9.47 7.88,8.08 8.59,7.49 9.87,8.19 10.52,7.99 11.20,6.70 12.12,6.79 12.53,8.19 13.13,8.51 14.52,8.08 15.11,8.79 14.41,10.07 14.61,10.72" fill="url(#gOr)" stroke="#c47a10" stroke-width="0.6"/><circle cx="11.2" cy="11.4" r="1.41" fill="#c4501a"/></svg>
<svg style="left:46px;top:687px" width="16" height="16" viewBox="0 0 16 16" ><polygon points="14.30,7.00 14.25,7.82 12.27,8.20 12.10,8.78 13.58,10.17 13.18,10.88 11.22,10.37 10.82,10.82 11.55,12.71 10.88,13.18 9.34,11.87 8.78,12.10 8.62,14.12 7.82,14.25 7.00,12.40 6.40,12.37 5.38,14.12 4.59,13.89 4.66,11.87 4.13,11.57 2.45,12.71 1.84,12.16 2.78,10.37 2.43,9.87 0.42,10.17 0.11,9.41 1.73,8.20 1.63,7.60 -0.30,7.00 -0.25,6.18 1.73,5.80 1.90,5.22 0.42,3.83 0.82,3.12 2.78,3.63 3.18,3.18 2.45,1.29 3.12,0.82 4.66,2.13 5.22,1.90 5.38,-0.12 6.18,-0.25 7.00,1.60 7.60,1.63 8.62,-0.12 9.41,0.11 9.34,2.13 9.87,2.43 11.55,1.29 12.16,1.84 11.22,3.63 11.57,4.13 13.58,3.83 13.89,4.59 12.27,5.80 12.37,6.40" fill="#525f72"/><circle cx="7" cy="7" r="4.3" fill="#c4ccd6"/><circle cx="7" cy="7" r="4.3" fill="none" stroke="#46525f" stroke-width="0.7"/><path d="M7 2.8V7L3.4 9.2M7 7L10.6 9.2" stroke="#4f5a66" stroke-width="1" fill="none"/><circle cx="7" cy="7" r="1.5" fill="#3f4852"/><polygon points="15.90,11.40 15.81,12.32 14.41,12.73 14.09,13.33 14.52,14.72 13.81,15.31 12.53,14.61 11.88,14.81 11.20,16.10 10.28,16.01 9.87,14.61 9.27,14.29 7.88,14.72 7.29,14.01 7.99,12.73 7.79,12.08 6.50,11.40 6.59,10.48 7.99,10.07 8.31,9.47 7.88,8.08 8.59,7.49 9.87,8.19 10.52,7.99 11.20,6.70 12.12,6.79 12.53,8.19 13.13,8.51 14.52,8.08 15.11,8.79 14.41,10.07 14.61,10.72" fill="url(#gOr)" stroke="#c47a10" stroke-width="0.6"/><circle cx="11.2" cy="11.4" r="1.41" fill="#c4501a"/></svg>
<svg style="left:46px;top:137px" width="16" height="16" viewBox="0 0 16 16" ><rect x="1.5" y="3.5" width="12" height="11" fill="#f8e28a" stroke="#c9a040" stroke-width="0.8"/><rect x="7" y="8" width="6" height="6" fill="#f3cc5a"/><circle cx="4.8" cy="11" r="4" fill="url(#gBall)" stroke="#3a6fc8" stroke-width="0.8"/><path d="M7.5 4.5H15.5M11.5 0.5V8.5" stroke="#0a7a0a" stroke-width="3.2"/><path d="M8.1 4.5H14.9M11.5 1.1V7.9" stroke="#3fe03f" stroke-width="1.6"/></svg>
<svg style="left:46px;top:159px" width="16" height="16" viewBox="0 0 16 16" ><path d="M8 0.8C11.2 0.8 13 3 13 5.6C13 8 11 9 10.5 11.5H5.5C5 9 3 8 3 5.6C3 3 4.8 0.8 8 0.8z" fill="#ffe95a" stroke="#4a8ad8" stroke-width="0.9"/><path d="M6.5 6L8 10L9.5 6" fill="none" stroke="#e8b020" stroke-width="0.8"/><rect x="5.8" y="11.5" width="4.4" height="3" rx="1" fill="#6ab0f0" stroke="#3a78c8" stroke-width="0.6"/><rect x="6.8" y="14.3" width="2.4" height="1.2" fill="#3a78c8"/></svg>
<svg style="left:46px;top:181px" width="16" height="16" viewBox="0 0 16 16" ><rect x="4.5" y="0.8" width="8" height="12.2" fill="url(#gYel)" stroke="#8a6a10" stroke-width="0.9"/><path d="M0.5 3.5H4.5M0.5 6.5H4.5M0.5 9.5H4.5M12.5 4.5H16M12.5 8.5H16M7.5 13V15.5H0.5" fill="none" stroke="#555" stroke-width="1"/></svg>
<svg style="left:46px;top:236px" width="16" height="16" viewBox="0 0 16 16" ><rect x="0.7" y="10.7" width="4.6" height="4.6" fill="#f8d648" stroke="#b8860c" stroke-width="0.8"/><rect x="2.0" y="12.0" width="2" height="2" fill="#fff8c0"/><rect x="5.7" y="10.7" width="4.6" height="4.6" fill="#f8d648" stroke="#b8860c" stroke-width="0.8"/><rect x="7.0" y="12.0" width="2" height="2" fill="#fff8c0"/><rect x="10.7" y="10.7" width="4.6" height="4.6" fill="#f8d648" stroke="#b8860c" stroke-width="0.8"/><rect x="12.0" y="12.0" width="2" height="2" fill="#fff8c0"/><rect x="2.6" y="6" width="4.6" height="4.6" fill="#f8d648" stroke="#b8860c" stroke-width="0.8"/><rect x="3.9000000000000004" y="7.3" width="2" height="2" fill="#fff8c0"/><rect x="7.6" y="6" width="4.6" height="4.6" fill="#f8d648" stroke="#b8860c" stroke-width="0.8"/><rect x="8.9" y="7.3" width="2" height="2" fill="#fff8c0"/><rect x="4.6" y="1.3" width="4.6" height="4.6" fill="#f8d648" stroke="#b8860c" stroke-width="0.8"/><rect x="5.8999999999999995" y="2.6" width="2" height="2" fill="#fff8c0"/><path d="M7.5 4.5H15.5M11.5 0.5V8.5" stroke="#0a7a0a" stroke-width="3.2"/><path d="M8.1 4.5H14.9M11.5 1.1V7.9" stroke="#3fe03f" stroke-width="1.6"/></svg>
<svg style="left:46px;top:258px" width="16" height="16" viewBox="0 0 16 16" ><path d="M0.3 2.5H5L6.3 4H9.5V6.5L12 5.5C13 4.5 13 3 12 2L10 0.3L13.5 0.5C15.5 1.5 16 4 15 6L16 7.5L14.8 9.5L13 11.5H9L7 13L3.5 13.2L0.3 15.5z" fill="#8e8e8e"/><circle cx="10" cy="2.3" r="1.1" fill="#f4f4f4"/></svg>
<svg style="left:46px;top:280px" width="16" height="16" viewBox="0 0 16 16" ><circle cx="5.2" cy="5" r="4.3" fill="#8e8e8e"/><circle cx="9.2" cy="4.6" r="3.4" fill="#8e8e8e"/><circle cx="4.6" cy="9" r="4" fill="#8e8e8e"/><circle cx="10.6" cy="9.4" r="5" fill="#8e8e8e"/><circle cx="8" cy="12.6" r="3.2" fill="#8e8e8e"/></svg>
<svg style="left:46px;top:357px" width="16" height="16" viewBox="0 0 16 16" ><path d="M11 11L15 15.2" stroke="#c8501c" stroke-width="2.4" stroke-linecap="round"/><circle cx="7" cy="7" r="6.3" fill="#eaf6ff" stroke="#d8a848" stroke-width="1.3"/><circle cx="7" cy="7" r="5.4" fill="none" stroke="#6aa0d8" stroke-width="0.8"/><path d="M2.5 10V4H4.5V10H6.5V4H8.5V10H10.5V4H11.8V9" fill="none" stroke="#2a62b8" stroke-width="1"/></svg>
<svg style="left:46px;top:434px" width="16" height="16" viewBox="0 0 16 16" ><path d="M0.7 14.5V4.5H5L6.2 6H12.5V14.5z" fill="#f7dc7a" stroke="#a88a3a" stroke-width="0.8"/><path d="M8 14.5L10 8H15.3L12.8 14.5z" fill="url(#gFold)" stroke="#a88a3a" stroke-width="0.7"/><rect x="2.5" y="8.5" width="5" height="5" fill="#e8f2ff" stroke="#3a6fd0"/><rect x="4" y="10" width="2.2" height="2.2" fill="#3a86e0"/><path d="M8.5 0.8C12 0.4 13.4 2 13.2 4.6H15.4L12 8.2L8.8 4.6H10.8C10.9 3.2 10.2 2.4 8.5 2.5z" fill="#2fc32f" stroke="#0e8a0e" stroke-width="0.6"/></svg>
<svg style="left:46px;top:533px" width="16" height="16" viewBox="0 0 16 16" ><path d="M0.7 14.5V4.5H5L6.2 6H12.5V14.5z" fill="#f7dc7a" stroke="#a88a3a" stroke-width="0.8"/><path d="M8 14.5L10 8H15.3L12.8 14.5z" fill="url(#gFold)" stroke="#a88a3a" stroke-width="0.7"/><rect x="2.5" y="8.5" width="5" height="5" fill="#e8f2ff" stroke="#3a6fd0"/><rect x="4" y="10" width="2.2" height="2.2" fill="#3a86e0"/><path d="M8.5 0.8C12 0.4 13.4 2 13.2 4.6H15.4L12 8.2L8.8 4.6H10.8C10.9 3.2 10.2 2.4 8.5 2.5z" fill="#2fc32f" stroke="#0e8a0e" stroke-width="0.6"/></svg>
<svg style="left:46px;top:632px" width="16" height="16" viewBox="0 0 16 16" ><path d="M0.7 14.5V4.5H5L6.2 6H12.5V14.5z" fill="#f7dc7a" stroke="#a88a3a" stroke-width="0.8"/><path d="M8 14.5L10 8H15.3L12.8 14.5z" fill="url(#gFold)" stroke="#a88a3a" stroke-width="0.7"/><rect x="2.5" y="8.5" width="5" height="5" fill="#e8f2ff" stroke="#3a6fd0"/><rect x="4" y="10" width="2.2" height="2.2" fill="#3a86e0"/><path d="M8.5 0.8C12 0.4 13.4 2 13.2 4.6H15.4L12 8.2L8.8 4.6H10.8C10.9 3.2 10.2 2.4 8.5 2.5z" fill="#2fc32f" stroke="#0e8a0e" stroke-width="0.6"/></svg>
<svg style="left:46px;top:731px" width="16" height="16" viewBox="0 0 16 16" ><path d="M0.7 14.5V4.5H5L6.2 6H12.5V14.5z" fill="#f7dc7a" stroke="#a88a3a" stroke-width="0.8"/><path d="M8 14.5L10 8H15.3L12.8 14.5z" fill="url(#gFold)" stroke="#a88a3a" stroke-width="0.7"/><rect x="2" y="8" width="6.5" height="6" fill="#1f9a3a" stroke="#0a5a1a" stroke-width="0.7"/><rect x="3.5" y="9.5" width="3.5" height="3" fill="#c83a2a"/><path d="M8.5 0.8C12 0.4 13.4 2 13.2 4.6H15.4L12 8.2L8.8 4.6H10.8C10.9 3.2 10.2 2.4 8.5 2.5z" fill="#2fc32f" stroke="#0e8a0e" stroke-width="0.6"/></svg>
<svg style="left:46px;top:511px" width="16" height="16" viewBox="0 0 16 16" ><path d="M3.5 0.8L15.5 8L3.5 15.2z" fill="#24b424" stroke="#0c800c" stroke-width="0.7"/><circle cx="4.2" cy="4.8" r="2.7" fill="url(#gBall)" stroke="#2d5fb0" stroke-width="0.5"/><circle cx="7.6" cy="8" r="2.7" fill="url(#gBall)" stroke="#2d5fb0" stroke-width="0.5"/><circle cx="4.2" cy="11.2" r="2.7" fill="url(#gBall)" stroke="#2d5fb0" stroke-width="0.5"/></svg>
<svg style="left:49px;top:610px" width="16" height="16" viewBox="0 0 16 16" ><path d="M1 1L11 8L1 15z" fill="url(#gGreen)" stroke="#129012" stroke-width="1"/></svg>
<svg style="left:46px;top:709px" width="16" height="16" viewBox="0 0 16 16" ><path d="M5.5 3.5H12.5L15.5 6.5V15.5H5.5z" fill="#e8f1ff" stroke="#7f9fd6"/><path d="M12.5 3.5V6.5H15.5" fill="none" stroke="#7f9fd6"/><text x="6.4" y="13.8" font-size="5.6" font-family="Liberation Sans" font-weight="bold" fill="#3f6fd0" letter-spacing="-0.2">101</text><path d="M3 0.5H7V4H9.8L5 9L0.2 4H3z" fill="#2fc32f" stroke="#0e8a0e" stroke-width="0.6"/></svg>
<svg style="left:220.5px;top:82px" width="16" height="15" viewBox="0 0 16 15" ><path d="M9 9L14.4 14" stroke="#b8321c" stroke-width="2.2" stroke-linecap="round"/><circle cx="5.6" cy="5.4" r="4.5" fill="url(#gLens)" stroke="#5a8fd8" stroke-width="1.3"/></svg>
<svg style="left:243px;top:82px" width="15" height="15" viewBox="0 0 15 15" preserveAspectRatio="none"><rect x="0.6" y="0.6" width="13.8" height="3.8" fill="#fdeab0" stroke="#d08418" stroke-width="1"/><rect x="0.6" y="10.6" width="13.8" height="3.8" fill="#fdeab0" stroke="#d08418" stroke-width="1"/><path d="M3.2 2.2H11.8L7.5 6.9z" fill="#35cf35" stroke="#0c8a0c" stroke-width="0.7"/><path d="M3.2 12.8H11.8L7.5 8.1z" fill="#35cf35" stroke="#0c8a0c" stroke-width="0.7"/></svg>
<svg style="left:265px;top:82px" width="15" height="15" viewBox="0 0 15 15" preserveAspectRatio="none"><rect x="0.6" y="2.6" width="13.8" height="3.8" fill="#fdeab0" stroke="#d08418" stroke-width="1"/><rect x="0.6" y="8.6" width="13.8" height="3.8" fill="#fdeab0" stroke="#d08418" stroke-width="1"/><path d="M3.6 4.6H11.4L7.5 0.4z" fill="#35cf35" stroke="#0c8a0c" stroke-width="0.7"/><path d="M3.6 10.4H11.4L7.5 14.6z" fill="#35cf35" stroke="#0c8a0c" stroke-width="0.7"/></svg>
<svg style="left:292.5px;top:82.3px" width="16" height="15" viewBox="0 0 16 15" ><rect x="2.5" y="0.8" width="10.5" height="13.6" rx="1.2" fill="url(#gChip)" stroke="#3f62a8" stroke-width="0.9"/><rect x="0.6" y="3" width="2" height="1.1" fill="#4a6cb0"/><rect x="13" y="3" width="2" height="1.1" fill="#4a6cb0"/><rect x="0.6" y="5.8" width="2" height="1.1" fill="#4a6cb0"/><rect x="13" y="5.8" width="2" height="1.1" fill="#4a6cb0"/><rect x="0.6" y="8.6" width="2" height="1.1" fill="#4a6cb0"/><rect x="13" y="8.6" width="2" height="1.1" fill="#4a6cb0"/><rect x="0.6" y="11.4" width="2" height="1.1" fill="#4a6cb0"/><rect x="13" y="11.4" width="2" height="1.1" fill="#4a6cb0"/></svg>
<svg style="left:314px;top:82px" width="16" height="16" viewBox="0 0 16 16" ><path d="M8 0.8L15.3 4.5V11.2L8 15L0.7 11.2V4.5z" fill="#a8c4e8" stroke="#5a82c0" stroke-width="0.8"/><path d="M8 0.8L15.3 4.5L8 8.2L0.7 4.5z" fill="#dceaf8" stroke="#5a82c0" stroke-width="0.6"/><path d="M8 8.2V15L15.3 11.2V4.5z" fill="#7fa6d8" stroke="#5a82c0" stroke-width="0.6"/><path d="M6 3.4L10.5 5.6L10.5 8" fill="none" stroke="#fff" stroke-width="1.2" opacity="0.7"/></svg>
<svg style="left:337px;top:83px" width="14" height="14" viewBox="0 0 14 14" ><rect x="0.6" y="0.6" width="13" height="12.8" fill="#fff" stroke="#5a7ab8" stroke-width="1.1"/><path d="M2.5 3.5H8.5M2.5 11H8.5" stroke="#6a3a4a" stroke-width="1"/><path d="M5.5 5.5H12M5.5 7.3H12M5.5 9.1H12" stroke="#3a78c8" stroke-width="1"/></svg>
<svg style="left:358.5px;top:83px" width="16" height="15" viewBox="0 0 16 15" ><path d="M10.5 12.6C7 14.2 2.2 12.2 1.6 8C1 3.8 5 0.8 8.8 2.2" fill="none" stroke="#5a9ae0" stroke-width="2.6"/><path d="M8 0L13.5 1.2L10.5 6z" fill="#2a62b8"/><rect x="9.2" y="7.8" width="6" height="6" fill="#e4e4e4" stroke="#333" stroke-width="0.9"/></svg>
<svg style="left:380.5px;top:82.3px" width="16" height="15" viewBox="0 0 16 15" ><rect x="2.5" y="0.8" width="10.5" height="13.6" rx="1.2" fill="url(#gChipO)" stroke="#a8480a" stroke-width="0.9"/><rect x="0.6" y="3" width="2" height="1.1" fill="#b8500a"/><rect x="13" y="3" width="2" height="1.1" fill="#b8500a"/><rect x="0.6" y="5.8" width="2" height="1.1" fill="#b8500a"/><rect x="13" y="5.8" width="2" height="1.1" fill="#b8500a"/><rect x="0.6" y="8.6" width="2" height="1.1" fill="#b8500a"/><rect x="13" y="8.6" width="2" height="1.1" fill="#b8500a"/><rect x="0.6" y="11.4" width="2" height="1.1" fill="#b8500a"/><rect x="13" y="11.4" width="2" height="1.1" fill="#b8500a"/></svg>
<svg style="left:402px;top:82px" width="16" height="16" viewBox="0 0 16 16" ><path d="M8 0.8L15.3 4.5V11.2L8 15L0.7 11.2V4.5z" fill="#eaa878" stroke="#b8682a" stroke-width="0.8"/><path d="M8 0.8L15.3 4.5L8 8.2L0.7 4.5z" fill="#f8d8b8" stroke="#b8682a" stroke-width="0.6"/><path d="M8 8.2V15L15.3 11.2V4.5z" fill="#d88848" stroke="#b8682a" stroke-width="0.6"/><path d="M6 3.4L10.5 5.6L10.5 8" fill="none" stroke="#fff" stroke-width="1.2" opacity="0.7"/></svg>
<svg style="left:425px;top:83px" width="14" height="14" viewBox="0 0 14 14" ><rect x="0.6" y="0.6" width="13" height="12.8" fill="#fff" stroke="#e0701a" stroke-width="1.1"/><path d="M2.5 3.5H8.5M2.5 11H8.5" stroke="#5a4a6a" stroke-width="1"/><path d="M5.5 5.5H12M5.5 7.3H12M5.5 9.1H12" stroke="#f08020" stroke-width="1"/></svg>
<span class="t" style="left:445.5px;top:83.5px;height:14px;line-height:14px;font-size:10px;font-weight:bold;letter-spacing:0.000px;transform:scaleX(0.9001);transform-origin:0 50%;color:#d4681c;">F(x)</span>
<svg style="left:468.5px;top:83px" width="16" height="15" viewBox="0 0 16 15" ><path d="M10.5 12.6C7 14.2 2.2 12.2 1.6 8C1 3.8 5 0.8 8.8 2.2" fill="none" stroke="#e0701a" stroke-width="2.6"/><path d="M8 0L13.5 1.2L10.5 6z" fill="#c85a10"/><rect x="9.2" y="7.8" width="6" height="6" fill="#e4e4e4" stroke="#333" stroke-width="0.9"/></svg>
<svg style="left:237.5px;top:132px" width="9" height="10" viewBox="0 0 9 10" ><rect x="1" y="0.5" width="7" height="9" rx="1" fill="url(#gChip)" stroke="#3f62a8" stroke-width="0.7"/><path d="M0 2.5H1M0 5H1M0 7.5H1M8 2.5H9M8 5H9M8 7.5H9" stroke="#4a6cb0" stroke-width="0.8"/></svg>
<svg style="left:252.5px;top:148px" width="10" height="10" viewBox="0 0 10 10" ><rect x="1" y="0.5" width="8" height="9" rx="1" fill="url(#gChip)" stroke="#3f62a8" stroke-width="0.7"/><path d="M0 2.5H1M0 5H1M0 7.5H1M9 2.5H10M9 5H10M9 7.5H10" stroke="#4a6cb0" stroke-width="0.8"/></svg>
<svg style="left:241.5px;top:722.5px" width="14" height="12" viewBox="0 0 14 12" ><rect x="4.5" y="0.5" width="4" height="3" fill="#dfeaff" stroke="#3a6fd0" stroke-width="0.9"/><path d="M6.5 3.5V6H1.5V8M6.5 6V8M6.5 6H11.5V8" fill="none" stroke="#555" stroke-width="0.8"/><rect x="0.3" y="8" width="3" height="3" fill="#d8ffd8" stroke="#1a9a3a" stroke-width="0.8"/><rect x="5" y="8" width="3" height="3" fill="#d8ffd8" stroke="#1a9a3a" stroke-width="0.8"/><rect x="10" y="8" width="3" height="3" fill="#d8ffd8" stroke="#1a9a3a" stroke-width="0.8"/></svg>
<svg style="left:307px;top:721.3px" width="12" height="14" viewBox="0 0 12 14" ><path d="M6 4L3 10M6 4L9.5 10" stroke="#555" stroke-width="0.8"/><circle cx="6" cy="3.2" r="2.6" fill="url(#gBall)" stroke="#2d5fb0" stroke-width="0.7"/><circle cx="2.8" cy="10.6" r="2.5" fill="url(#gBall)" stroke="#2d5fb0" stroke-width="0.7"/><circle cx="9.4" cy="10.6" r="2.5" fill="url(#gBall)" stroke="#2d5fb0" stroke-width="0.7"/></svg>
<svg style="left:522px;top:81.5px" width="16" height="15" viewBox="0 0 16 15" ><path d="M9 9L14.4 14" stroke="#b8321c" stroke-width="2.2" stroke-linecap="round"/><circle cx="5.6" cy="5.4" r="4.5" fill="url(#gLens)" stroke="#5a8fd8" stroke-width="1.3"/></svg>
<svg style="left:542px;top:80px" width="22" height="21" viewBox="0 0 22 21" ><path d="M3.5 3.5H6.5V9M10 9V3.5H14.5V9" fill="none" stroke="#5a9a3a" stroke-width="1.1"/></svg>
<svg style="left:564px;top:80px" width="22" height="21" viewBox="0 0 22 21" ><path d="M3.5 3.5H6.5V9M10 9V3.5H14.5V9" fill="none" stroke="#5a9a3a" stroke-width="1.1"/></svg>
<svg style="left:586px;top:80px" width="22" height="21" viewBox="0 0 22 21" ><path d="M3.5 3.5H6.5V9M10 9V3.5H14.5V9" fill="none" stroke="#5a9a3a" stroke-width="1.1"/></svg>
<svg style="left:608px;top:80px" width="22" height="21" viewBox="0 0 22 21" ><path d="M2.5 3.5H6V11.5H9.5M9.5 11.5V3.5H13.5V8" fill="none" stroke="#5a9a3a" stroke-width="1.1"/></svg>
<svg style="left:630px;top:80px" width="22" height="21" viewBox="0 0 22 21" ><path d="M2.5 3.5H6V11.5H9.5M9.5 11.5V3.5H13.5V8" fill="none" stroke="#5a9a3a" stroke-width="1.1"/></svg>
<svg style="left:652px;top:80px" width="22" height="21" viewBox="0 0 22 21" ><path d="M2.5 3.5H6V11.5H9.5M9.5 11.5V3.5H13.5V8" fill="none" stroke="#5a9a3a" stroke-width="1.1"/></svg>
<div style="left:545.5px;top:87.5px;width:15.5px;height:10px;background:linear-gradient(100deg,#fff2d0,#f0a010);border:1px solid #5a4a2a;border-radius:1.5px;"></div>
<span class="t" style="left:549px;top:88.3px;height:10px;line-height:10px;font-size:10px;font-weight:bold;font-family:'Liberation Mono',monospace;width:9px;text-align:center;">I</span>
<div style="left:567.5px;top:87.5px;width:15.5px;height:10px;background:linear-gradient(100deg,#e8ffe0,#38c038);border:1px solid #3a5a3a;border-radius:1.5px;"></div>
<span class="t" style="left:571px;top:88.3px;height:10px;line-height:10px;font-size:10px;font-weight:bold;font-family:'Liberation Mono',monospace;width:9px;text-align:center;">O</span>
<div style="left:590px;top:90px;width:15px;height:7.5px;background:linear-gradient(#d8ecff,#3a8ae8);border:1px solid #2a4a8a;border-radius:1px;"></div>
<span class="t" style="left:591.2px;top:90.5px;height:7px;line-height:7px;font-size:7px;font-weight:bold;letter-spacing:0.939px;transform:scaleX(1.0700);transform-origin:0 50%;color:#14204a;">I/O</span>
<svg style="left:618px;top:88.5px" width="10" height="10" viewBox="0 0 10 10" ><circle cx="5" cy="5" r="4.3" fill="#8a8a8a" stroke="#4a4a4a" stroke-width="0.8"/><circle cx="5" cy="5" r="1.5" fill="#111"/><circle cx="3.6" cy="3.4" r="1.1" fill="#dadada"/></svg>
<svg style="left:638px;top:88px" width="11" height="11" viewBox="0 0 11 11" ><circle cx="5.5" cy="5.5" r="5" fill="#2a4ad8" stroke="#1a2a8a" stroke-width="0.7"/><circle cx="4.3" cy="3.8" r="2" fill="#6a8af0" opacity="0.7"/><text x="2.6" y="8.6" font-size="8.5" font-weight="bold" font-family="Liberation Sans" fill="#fff">C</text></svg>
<svg style="left:660px;top:87.5px" width="11" height="11" viewBox="0 0 11 11" ><circle cx="5.5" cy="5.5" r="5" fill="#f8d860" stroke="#5a4a1a" stroke-width="0.8"/><circle cx="4.3" cy="3.8" r="2" fill="#fff4c0" opacity="0.8"/><text x="2.7" y="8.6" font-size="8" font-weight="bold" font-family="Liberation Sans" fill="#3a2a0a">V</text></svg>
<svg style="left:537.3px;top:131.2px" width="12" height="12" viewBox="0 0 12 12" ><path d="M0.5 0.6H3V8H5.8V0.6H8.6V8.4" fill="none" stroke="#6f9a6f" stroke-width="1.1"/><path d="M1.5 1.6H2.2V8.8H5" fill="none" stroke="#c8d4c8" stroke-width="0.6" opacity="0.7"/><circle cx="8.8" cy="8.8" r="2.9" fill="#8a8a8a" stroke="#4a4a4a" stroke-width="0.7"/><circle cx="8.8" cy="8.8" r="1" fill="#1a1a1a"/><circle cx="7.8" cy="7.8" r="0.8" fill="#d8d8d8"/></svg>
<svg style="left:537.3px;top:147.2px" width="12" height="12" viewBox="0 0 12 12" ><path d="M0.5 0.6H3V8H5.8V0.6H8.6V8.4" fill="none" stroke="#6f9a6f" stroke-width="1.1"/><path d="M1.5 1.6H2.2V8.8H5" fill="none" stroke="#c8d4c8" stroke-width="0.6" opacity="0.7"/><circle cx="8.8" cy="8.8" r="2.9" fill="#8a8a8a" stroke="#4a4a4a" stroke-width="0.7"/><circle cx="8.8" cy="8.8" r="1" fill="#1a1a1a"/><circle cx="7.8" cy="7.8" r="0.8" fill="#d8d8d8"/></svg>
<svg style="left:536.8px;top:164.2px" width="13" height="11" viewBox="0 0 13 11" ><path d="M0.5 0.8H4L6.2 3.2L8.4 0.8H12V7H8.4L6.2 4.6L4 7H0.5z" fill="url(#gBlue)" stroke="#2a6ac8" stroke-width="0.5"/><path d="M1 1.3H3.8L5.5 3" stroke="#c8e8ff" stroke-width="0.9" fill="none"/><circle cx="9.2" cy="7.6" r="2.9" fill="#8a8a8a" stroke="#4a4a4a" stroke-width="0.7"/><circle cx="9.2" cy="7.6" r="1" fill="#1a1a1a"/><circle cx="8.2" cy="6.6" r="0.8" fill="#d8d8d8"/></svg>
<svg style="left:553.6px;top:179.2px" width="12" height="12" viewBox="0 0 12 12" ><path d="M0.5 0.6H3V8H5.8V0.6H8.6V8.4" fill="none" stroke="#6f9a6f" stroke-width="1.1"/><path d="M1.5 1.6H2.2V8.8H5" fill="none" stroke="#c8d4c8" stroke-width="0.6" opacity="0.7"/><circle cx="8.8" cy="8.8" r="2.9" fill="#8a8a8a" stroke="#4a4a4a" stroke-width="0.7"/><circle cx="8.8" cy="8.8" r="1" fill="#1a1a1a"/><circle cx="7.8" cy="7.8" r="0.8" fill="#d8d8d8"/></svg>
<svg style="left:553.6px;top:195.2px" width="12" height="12" viewBox="0 0 12 12" ><path d="M0.5 0.6H3V8H5.8V0.6H8.6V8.4" fill="none" stroke="#6f9a6f" stroke-width="1.1"/><path d="M1.5 1.6H2.2V8.8H5" fill="none" stroke="#c8d4c8" stroke-width="0.6" opacity="0.7"/><circle cx="8.8" cy="8.8" r="2.9" fill="#8a8a8a" stroke="#4a4a4a" stroke-width="0.7"/><circle cx="8.8" cy="8.8" r="1" fill="#1a1a1a"/><circle cx="7.8" cy="7.8" r="0.8" fill="#d8d8d8"/></svg>
<svg style="left:536.8px;top:212.2px" width="13" height="11" viewBox="0 0 13 11" ><path d="M0.5 0.8H4L6.2 3.2L8.4 0.8H12V7H8.4L6.2 4.6L4 7H0.5z" fill="url(#gBlue)" stroke="#2a6ac8" stroke-width="0.5"/><path d="M1 1.3H3.8L5.5 3" stroke="#c8e8ff" stroke-width="0.9" fill="none"/><circle cx="9.2" cy="7.6" r="2.9" fill="#8a8a8a" stroke="#4a4a4a" stroke-width="0.7"/><circle cx="9.2" cy="7.6" r="1" fill="#1a1a1a"/><circle cx="8.2" cy="6.6" r="0.8" fill="#d8d8d8"/></svg>
<svg style="left:553.6px;top:227.2px" width="12" height="12" viewBox="0 0 12 12" ><path d="M0.5 0.6H3V8H5.8V0.6H8.6V8.4" fill="none" stroke="#6f9a6f" stroke-width="1.1"/><path d="M1.5 1.6H2.2V8.8H5" fill="none" stroke="#c8d4c8" stroke-width="0.6" opacity="0.7"/><circle cx="8.8" cy="8.8" r="2.9" fill="#8a8a8a" stroke="#4a4a4a" stroke-width="0.7"/><circle cx="8.8" cy="8.8" r="1" fill="#1a1a1a"/><circle cx="7.8" cy="7.8" r="0.8" fill="#d8d8d8"/></svg>
<svg style="left:553.6px;top:243.2px" width="12" height="12" viewBox="0 0 12 12" ><path d="M0.5 0.6H3V8H5.8V0.6H8.6V8.4" fill="none" stroke="#6f9a6f" stroke-width="1.1"/><path d="M1.5 1.6H2.2V8.8H5" fill="none" stroke="#c8d4c8" stroke-width="0.6" opacity="0.7"/><circle cx="8.8" cy="8.8" r="2.9" fill="#8a8a8a" stroke="#4a4a4a" stroke-width="0.7"/><circle cx="8.8" cy="8.8" r="1" fill="#1a1a1a"/><circle cx="7.8" cy="7.8" r="0.8" fill="#d8d8d8"/></svg>
<svg style="left:553.6px;top:259.2px" width="12" height="12" viewBox="0 0 12 12" ><path d="M0.5 0.6H3V8H5.8V0.6H8.6V8.4" fill="none" stroke="#6f9a6f" stroke-width="1.1"/><path d="M1.5 1.6H2.2V8.8H5" fill="none" stroke="#c8d4c8" stroke-width="0.6" opacity="0.7"/><circle cx="8.8" cy="8.8" r="2.9" fill="#8a8a8a" stroke="#4a4a4a" stroke-width="0.7"/><circle cx="8.8" cy="8.8" r="1" fill="#1a1a1a"/><circle cx="7.8" cy="7.8" r="0.8" fill="#d8d8d8"/></svg>
<svg style="left:553.6px;top:275.2px" width="12" height="12" viewBox="0 0 12 12" ><path d="M0.5 0.6H3V8H5.8V0.6H8.6V8.4" fill="none" stroke="#6f9a6f" stroke-width="1.1"/><path d="M1.5 1.6H2.2V8.8H5" fill="none" stroke="#c8d4c8" stroke-width="0.6" opacity="0.7"/><circle cx="8.8" cy="8.8" r="2.9" fill="#8a8a8a" stroke="#4a4a4a" stroke-width="0.7"/><circle cx="8.8" cy="8.8" r="1" fill="#1a1a1a"/><circle cx="7.8" cy="7.8" r="0.8" fill="#d8d8d8"/></svg>
<svg style="left:536.8px;top:292.2px" width="13" height="11" viewBox="0 0 13 11" ><path d="M0.5 0.8H4L6.2 3.2L8.4 0.8H12V7H8.4L6.2 4.6L4 7H0.5z" fill="url(#gBlue)" stroke="#2a6ac8" stroke-width="0.5"/><path d="M1 1.3H3.8L5.5 3" stroke="#c8e8ff" stroke-width="0.9" fill="none"/><circle cx="9.2" cy="7.6" r="2.9" fill="#8a8a8a" stroke="#4a4a4a" stroke-width="0.7"/><circle cx="9.2" cy="7.6" r="1" fill="#1a1a1a"/><circle cx="8.2" cy="6.6" r="0.8" fill="#d8d8d8"/></svg>
<svg style="left:553.6px;top:307.2px" width="12" height="12" viewBox="0 0 12 12" ><path d="M0.5 0.6H3V8H5.8V0.6H8.6V8.4" fill="none" stroke="#6f9a6f" stroke-width="1.1"/><path d="M1.5 1.6H2.2V8.8H5" fill="none" stroke="#c8d4c8" stroke-width="0.6" opacity="0.7"/><circle cx="8.8" cy="8.8" r="2.9" fill="#8a8a8a" stroke="#4a4a4a" stroke-width="0.7"/><circle cx="8.8" cy="8.8" r="1" fill="#1a1a1a"/><circle cx="7.8" cy="7.8" r="0.8" fill="#d8d8d8"/></svg>
<svg style="left:553.6px;top:323.2px" width="12" height="12" viewBox="0 0 12 12" ><path d="M0.5 0.6H3V8H5.8V0.6H8.6V8.4" fill="none" stroke="#6f9a6f" stroke-width="1.1"/><path d="M1.5 1.6H2.2V8.8H5" fill="none" stroke="#c8d4c8" stroke-width="0.6" opacity="0.7"/><circle cx="8.8" cy="8.8" r="2.9" fill="#8a8a8a" stroke="#4a4a4a" stroke-width="0.7"/><circle cx="8.8" cy="8.8" r="1" fill="#1a1a1a"/><circle cx="7.8" cy="7.8" r="0.8" fill="#d8d8d8"/></svg>
<svg style="left:553.6px;top:339.2px" width="12" height="12" viewBox="0 0 12 12" ><path d="M0.5 0.6H3V8H5.8V0.6H8.6V8.4" fill="none" stroke="#6f9a6f" stroke-width="1.1"/><path d="M1.5 1.6H2.2V8.8H5" fill="none" stroke="#c8d4c8" stroke-width="0.6" opacity="0.7"/><circle cx="8.8" cy="8.8" r="2.9" fill="#8a8a8a" stroke="#4a4a4a" stroke-width="0.7"/><circle cx="8.8" cy="8.8" r="1" fill="#1a1a1a"/><circle cx="7.8" cy="7.8" r="0.8" fill="#d8d8d8"/></svg>
<svg style="left:553.6px;top:355.2px" width="12" height="12" viewBox="0 0 12 12" ><path d="M0.5 0.6H3V8H5.8V0.6H8.6V8.4" fill="none" stroke="#6f9a6f" stroke-width="1.1"/><path d="M1.5 1.6H2.2V8.8H5" fill="none" stroke="#c8d4c8" stroke-width="0.6" opacity="0.7"/><circle cx="8.8" cy="8.8" r="2.9" fill="#8a8a8a" stroke="#4a4a4a" stroke-width="0.7"/><circle cx="8.8" cy="8.8" r="1" fill="#1a1a1a"/><circle cx="7.8" cy="7.8" r="0.8" fill="#d8d8d8"/></svg>
<svg style="left:537.3px;top:371.2px" width="12" height="12" viewBox="0 0 12 12" ><path d="M0.5 0.6H3V8H5.5" fill="none" stroke="#6f9a6f" stroke-width="1.1"/><circle cx="8" cy="8" r="3.6" fill="#2a4ad8" stroke="#1a2a8a" stroke-width="0.6"/><text x="5.9" y="10.3" font-size="6.5" font-weight="bold" font-family="Liberation Sans" fill="#fff">c</text></svg>
<svg style="left:722px;top:65px" width="12" height="12" viewBox="0 0 12 12" ><circle cx="6" cy="6" r="5.5" fill="#d4e6fa" stroke="#6a9ad8" stroke-width="0.9"/><text x="1.6" y="8.6" font-size="7.5" font-family="Liberation Sans" fill="#2a4a9a" font-weight="bold" letter-spacing="-0.4">vh</text></svg>
<svg style="left:834px;top:65px" width="12" height="12" viewBox="0 0 12 12" ><circle cx="6" cy="6" r="5.5" fill="#d4e6fa" stroke="#6a9ad8" stroke-width="0.9"/><text x="1.6" y="8.6" font-size="7.5" font-family="Liberation Sans" fill="#2a4a9a" font-weight="bold" letter-spacing="-0.4">vh</text></svg>
<svg style="left:929px;top:65px" width="12" height="12" viewBox="0 0 12 12" ><rect x="0.3" y="0.3" width="11.4" height="11.4" rx="1.2" fill="#18a038" stroke="#0a5a1a" stroke-width="0.6"/><path d="M1.5 4.5C3 2.5 4.5 2.5 6 4.5C7.5 6.5 9 6.5 10.5 4.5M1.5 8C3 6 4.5 6 6 8C7.5 10 9 10 10.5 8" fill="none" stroke="#000" stroke-width="1.3"/></svg>
<svg style="left:717px;top:87px" width="15" height="16" viewBox="0 0 15 16" ><path d="M1 1.5H7.5M1 14.5H7.5" stroke="#444" stroke-width="1" stroke-dasharray="1 1"/><path d="M1 7.5H7.5M5 4.5L8 7.5L5 10.5" fill="none" stroke="#444" stroke-width="1.2"/><rect x="9.8" y="1.5" width="3.8" height="13" fill="#dfe8f6" stroke="#5a78b8" stroke-width="0.9"/></svg>
<svg style="left:717px;top:115px" width="14" height="14" viewBox="0 0 14 14" ><path d="M0.5 0.5H12L13.5 2V13.5H0.5z" fill="#2a6ad0" stroke="#1a4aa0" stroke-width="0.8"/><rect x="3.5" y="0.8" width="6.5" height="4" fill="#dfeaff"/><rect x="7" y="1.3" width="1.8" height="3" fill="#2a5ab8"/><rect x="2" y="6.5" width="10" height="7" fill="#fff"/><rect x="2" y="8" width="10" height="1.6" fill="#e04a4a"/><rect x="2" y="11.5" width="10" height="2" fill="#c82a2a"/></svg>
<svg style="left:715.6px;top:141.4px" width="17" height="15" viewBox="0 0 17 15" ><path d="M7 7.5L13.5 13.5" stroke="#c04a20" stroke-width="2" stroke-linecap="round"/><circle cx="4.8" cy="5" r="4.2" fill="url(#gLens)" stroke="#5a8fd0" stroke-width="1.1"/><path d="M10.5 5H15.5M13 2.5V7.5" stroke="#222" stroke-width="1.1"/></svg>
<svg style="left:715.6px;top:163px" width="17" height="15" viewBox="0 0 17 15" ><path d="M7 7.5L13.5 13.5" stroke="#c04a20" stroke-width="2" stroke-linecap="round"/><circle cx="4.8" cy="5" r="4.2" fill="url(#gLens)" stroke="#5a8fd0" stroke-width="1.1"/><path d="M10.5 5H15.5" stroke="#222" stroke-width="1.1"/></svg>
<svg style="left:715.5px;top:185px" width="17" height="16" viewBox="0 0 17 16" ><rect x="1" y="1" width="15" height="14" fill="none" stroke="#888" stroke-width="0.9" stroke-dasharray="1.5 1.5"/><path d="M0.5 3V0.5H3L0.5 3M16.5 3V0.5H14zM0.5 13V15.5H3zM16.5 13V15.5H14z" fill="#333"/><path d="M9.5 9.5L13.5 13.5" stroke="#c04a20" stroke-width="1.8" stroke-linecap="round"/><circle cx="7.2" cy="7" r="3.6" fill="url(#gLens)" stroke="#5a8fd0" stroke-width="1"/></svg>
<svg style="left:715px;top:213px" width="18" height="16" viewBox="0 0 18 16" ><path d="M11.5 14.5V1.5H16.5" fill="none" stroke="#6a6a2a" stroke-width="2.4"/><path d="M11.5 14.5V1.5H16.5" fill="none" stroke="#ffff20" stroke-width="1.4"/><path d="M0.5 7H5.5V5L9.5 8.8L5.5 12.6V10.6H0.5z" fill="#f0c830" stroke="#9a7a10" stroke-width="0.7"/></svg>
<svg style="left:717px;top:237px" width="12" height="14" viewBox="0 0 12 14" ><rect x="0.3" y="0" width="2" height="14" fill="#2d6fd2"/><path d="M10.8 0.5L3.3 7L10.8 13.5z" fill="url(#gBlue)" stroke="#2d6fd2" stroke-width="0.6"/></svg>
<svg style="left:720px;top:259px" width="12" height="14" viewBox="0 0 12 14" ><rect x="9.2" y="0" width="2" height="14" fill="#2d6fd2"/><path d="M0.6 0.5L8.2 7L0.6 13.5z" fill="url(#gBlue)" stroke="#2d6fd2" stroke-width="0.6"/></svg>
<svg style="left:716.5px;top:281.5px" width="16" height="14" viewBox="0 0 16 14" ><path d="M14.5 7.5V12.2H4.2V6.2H0.8" fill="none" stroke="#8e8e8e" stroke-width="2.6"/><path d="M4.5 3.8L9.8 0V2.3H15.5V5.5H9.8V7.6z" fill="#8e8e8e"/></svg>
<svg style="left:716.5px;top:303px" width="16" height="14" viewBox="0 0 16 14" ><path d="M0.5 12.2H14V5.5" fill="none" stroke="#8e8e8e" stroke-width="2.6"/><path d="M11.8 3.8L6.5 0V2.3H1V5.5H6.5V7.6z" fill="#8e8e8e"/></svg>
<svg style="left:716px;top:329px" width="17" height="15" viewBox="0 0 17 15" ><path d="M0.0 9.5H8.0M4 5.5V13.5" stroke="#0a7a0a" stroke-width="3.2"/><path d="M0.6 9.5H7.4M4 6.1V12.9" stroke="#3fe03f" stroke-width="1.6"/><path d="M10 14.5V1.5H15.5" fill="none" stroke="#1a5ac8" stroke-width="2.2"/><path d="M10 14.5V1.5H15.5" fill="none" stroke="#6ab8ff" stroke-width="0.9"/></svg>
<svg style="left:719px;top:351px" width="14" height="16" viewBox="0 0 14 16" ><path d="M1.8 15.5V1.8H8.5" fill="none" stroke="#8e8e8e" stroke-width="2.8"/><path d="M3.8 9.5L8.8 5V7.8H13V11.2H8.8V14z" fill="#8e8e8e"/></svg>
<svg style="left:716px;top:373px" width="16" height="16" viewBox="0 0 16 16" ><path d="M7 14H11V1.8H15.5" fill="none" stroke="#8e8e8e" stroke-width="2.8"/><path d="M9.2 9.5L4.5 5V7.8H0.3V11.2H4.5V14z" fill="#8e8e8e"/></svg>
<svg style="left:716px;top:400px" width="16" height="16" viewBox="0 0 16 16" ><rect x="0.3" y="0.2" width="3" height="15.5" fill="#8e8e8e"/><rect x="12.4" y="0.2" width="3" height="15.5" fill="#8e8e8e"/><path d="M4 11H12M6 9L4 11L6 13M10 9L12 11L10 13" fill="none" stroke="#8e8e8e" stroke-width="1"/></svg>
<svg style="left:716px;top:421px" width="18" height="18" viewBox="0 0 18 18" ><path d="M1 2.5H4.5V13H8.5V2.5H12V13H15" fill="none" stroke="#4a9a2a" stroke-width="1.2"/><path d="M5.5 5.5L10 13H7.2L8.4 16.2L7 16.8L5.8 13.6L3.8 15.2z" fill="#fff" stroke="#6a6a6a" stroke-width="0.6"/></svg>
<div style="left:716px;top:449px;width:16px;height:7px;background:#a4a4a4;"></div>
<svg style="left:221px;top:770px" width="15" height="15" viewBox="0 0 15 15" preserveAspectRatio="none"><rect x="0.6" y="0.6" width="13.8" height="3.8" fill="#fdeab0" stroke="#d08418" stroke-width="1"/><rect x="0.6" y="10.6" width="13.8" height="3.8" fill="#fdeab0" stroke="#d08418" stroke-width="1"/><path d="M3.2 2.2H11.8L7.5 6.9z" fill="#35cf35" stroke="#0c8a0c" stroke-width="0.7"/><path d="M3.2 12.8H11.8L7.5 8.1z" fill="#35cf35" stroke="#0c8a0c" stroke-width="0.7"/></svg>
<svg style="left:221px;top:792px" width="15" height="15" viewBox="0 0 15 15" preserveAspectRatio="none"><rect x="0.6" y="2.6" width="13.8" height="3.8" fill="#fdeab0" stroke="#d08418" stroke-width="1"/><rect x="0.6" y="8.6" width="13.8" height="3.8" fill="#fdeab0" stroke="#d08418" stroke-width="1"/><path d="M3.6 4.6H11.4L7.5 0.4z" fill="#35cf35" stroke="#0c8a0c" stroke-width="0.7"/><path d="M3.6 10.4H11.4L7.5 14.6z" fill="#35cf35" stroke="#0c8a0c" stroke-width="0.7"/></svg>
<div style="left:223px;top:815px;width:5px;height:14px;background:linear-gradient(90deg,#9abcec,#5a86cc);border:1px solid #3a62a8;"></div>
<div style="left:230px;top:815px;width:5px;height:14px;background:linear-gradient(90deg,#9abcec,#5a86cc);border:1px solid #3a62a8;"></div>
<svg style="left:221px;top:836px" width="16" height="16" viewBox="0 0 16 16" ><rect x="5.5" y="0.5" width="10" height="12.5" fill="#eef5ff" stroke="#5a82c8" stroke-width="0.9"/><path d="M7.5 3H13.5M7.5 5H13.5" stroke="#6a92d8" stroke-width="0.9"/><circle cx="3" cy="11.5" r="2.8" fill="#d0e8f4" stroke="#3a4a5a" stroke-width="0.9"/><circle cx="8.2" cy="12.5" r="2.8" fill="#d0e8f4" stroke="#3a4a5a" stroke-width="0.9"/><path d="M2 9L5.5 5.5L8 6.5L10.5 7.5L9.5 10" fill="#4a5a6a" stroke="#3a4a5a" stroke-width="0.8"/></svg>
<svg style="left:221px;top:858px" width="17" height="16" viewBox="0 0 17 16" ><path d="M0.5 0.5H7L10 3.5V11.5H0.5z" fill="#fff" stroke="#7f9fd6"/><path d="M2 4.5H7M2 6.5H8M2 8.5H8" stroke="#9db8e8" stroke-width="0.9"/><path d="M5.5 3.5H12.5L16 7V15.5H5.5z" fill="#fff" stroke="#3f6fd0"/><path d="M12.5 3.5V7H16" fill="none" stroke="#3f6fd0"/><path d="M7.5 9.5H14M7.5 11.5H14" stroke="#4a7fe0" stroke-width="1"/></svg>
<div style="left:0px;top:0px;width:1676px;height:3px;background:#fff;"></div>
<div style="left:0px;top:0px;width:5px;height:870px;background:#fff;"></div>
<div style="left:643px;top:45px;width:134px;height:18px;background:#ffffe1;border:1px solid #000;"></div>
<span class="t" style="left:647.5px;top:47.5px;height:14px;line-height:14px;font-size:12px;letter-spacing:-0.287px;">Run for 100us (Shift+F2)</span>
<svg style="left:0px;top:0px" width="1676" height="870" viewBox="0 0 1676 870" style="pointer-events:none"><path d="M16.4 305.6C20.6 304.3 26.8 303.4 31.6 303.3C36.5 303.2 40.3 304.5 45.5 305.0C50.7 305.5 54.8 306.4 63.0 306.3C71.2 306.2 84.2 303.9 94.8 304.3C105.4 304.8 116.9 306.8 126.4 309.0C135.9 311.2 145.4 314.9 151.7 317.6C158.0 320.3 160.7 321.6 164.3 325.2C167.9 328.8 172.3 334.6 173.2 339.0C174.0 343.4 171.9 348.2 169.4 351.8C166.9 355.4 165.2 357.0 158.0 360.6C150.8 364.2 138.0 370.4 126.4 373.3C114.8 376.2 100.1 378.0 88.5 378.3C76.9 378.6 65.3 377.3 56.9 375.2C48.5 373.1 44.2 369.4 37.9 365.7C31.6 362.0 24.3 357.2 19.0 353.0C13.7 348.8 9.2 345.7 6.3 340.4C3.4 335.1 1.8 326.2 1.8 321.4C1.8 316.5 3.9 313.9 6.3 311.3C8.7 308.7 12.2 306.9 16.4 305.6" fill="none" stroke="#ee1c24" stroke-width="2.0" stroke-linecap="round" stroke-linejoin="round"/><path d="M185.8 345.5C185.9 346.6 186.4 350.1 186.6 352.0C186.8 353.9 186.7 355.2 186.9 357.0C187.1 358.8 187.8 362.0 188.0 363.0" fill="none" stroke="#ee1c24" stroke-width="1.8" stroke-linecap="round" stroke-linejoin="round"/><path d="M284.5 146.1C283.1 145.8 279.7 145.5 276.7 145.3C273.7 145.1 270.0 144.7 266.4 144.8C262.8 144.9 258.5 145.2 255.2 145.7C251.9 146.2 248.7 146.5 246.6 147.8C244.5 149.1 243.3 151.5 242.7 153.4C242.0 155.3 242.2 157.6 242.7 159.5C243.2 161.4 243.9 163.3 245.7 164.7C247.5 166.1 250.5 167.1 253.4 167.7C256.3 168.3 259.9 168.6 262.9 168.5C265.9 168.4 269.2 168.0 271.6 167.2C274.1 166.4 275.7 165.2 277.6 163.8C279.5 162.4 281.4 160.3 282.8 158.6C284.2 156.9 285.8 155.3 286.2 153.4C286.6 151.5 285.6 148.6 285.3 147.4C285.0 146.2 285.9 146.4 284.5 146.1" fill="none" stroke="#ee1c24" stroke-width="2.0" stroke-linecap="round" stroke-linejoin="round"/><path d="M282.3 176.3C282.5 175.7 282.7 173.6 283.6 172.4C284.5 171.2 286.2 169.8 287.9 169.0C289.6 168.2 292.3 167.7 294.0 167.7C295.7 167.7 297.5 167.8 298.3 169.0C299.1 170.2 298.9 173.0 298.7 175.0C298.5 177.0 297.8 179.3 297.0 181.0C296.2 182.7 295.4 185.2 294.0 185.3C292.6 185.5 290.1 182.5 288.8 181.9C287.5 181.3 286.6 180.6 286.2 181.9C285.8 183.2 285.5 188.5 286.2 189.7C286.9 190.8 289.1 189.4 290.5 188.8C291.9 188.2 293.8 186.5 294.8 186.2C295.8 185.9 296.2 185.9 296.6 187.1C297.0 188.2 296.9 192.1 297.0 193.1" fill="none" stroke="#ee1c24" stroke-width="2.0" stroke-linecap="round" stroke-linejoin="round"/><path d="M580.2 3.4C581.8 2.2 586.4 2.8 589.0 2.7C591.6 2.6 593.6 2.3 595.8 2.7C597.9 3.1 599.9 4.0 601.9 5.3C603.9 6.6 606.5 8.8 607.9 10.6C609.3 12.4 610.1 14.1 610.2 15.9C610.3 17.7 609.8 19.8 608.7 21.2C607.6 22.6 605.2 23.5 603.4 24.3C601.6 25.1 600.1 25.8 598.1 25.8C596.1 25.8 593.4 25.1 591.2 24.3C589.1 23.5 587.0 22.6 585.2 21.2C583.4 19.8 581.6 17.8 580.6 15.9C579.6 14.0 579.6 12.0 579.5 9.9C579.4 7.8 578.6 4.6 580.2 3.4" fill="none" stroke="#ee1c24" stroke-width="2.0" stroke-linecap="round" stroke-linejoin="round"/><path d="M637.9 1.1C637.3 1.7 635.5 2.9 634.5 4.6C633.5 6.3 632.2 9.0 631.8 11.4C631.3 13.8 631.2 17.1 631.8 19.0C632.4 20.9 633.5 21.9 635.2 22.8C636.9 23.7 639.7 24.2 642.1 24.3C644.5 24.4 647.6 23.7 649.7 23.1C651.9 22.5 653.9 21.9 655.0 20.5C656.1 19.1 656.2 16.6 656.1 14.4C656.0 12.2 655.4 9.3 654.2 7.6C653.0 5.9 650.9 4.9 648.9 4.2C646.9 3.5 644.4 3.3 642.1 3.4C639.8 3.5 636.4 4.4 635.2 4.6" fill="none" stroke="#ee1c24" stroke-width="2.0" stroke-linecap="round" stroke-linejoin="round"/><path d="M611.4 37.6C612.3 37.5 615.0 36.8 617.0 36.8C619.0 36.8 622.0 36.9 623.1 37.9C624.2 38.9 623.8 41.1 623.5 42.5C623.2 43.9 623.2 45.4 621.6 46.3C620.0 47.2 614.0 47.4 613.6 47.8C613.2 48.2 618.0 47.8 619.3 48.6C620.6 49.4 621.7 51.0 621.6 52.4C621.5 53.8 620.1 55.7 618.6 56.9C617.1 58.1 614.7 59.1 612.5 59.6C610.3 60.1 606.5 59.9 605.3 59.9" fill="none" stroke="#ee1c24" stroke-width="2.0" stroke-linecap="round" stroke-linejoin="round"/><path d="M685.7 178.3C685.8 179.2 686.1 181.7 686.3 183.4C686.5 185.1 685.6 187.4 686.7 188.3C687.9 189.2 691.1 188.7 693.2 188.6C695.3 188.5 698.2 188.1 699.4 187.6C700.6 187.1 700.7 187.4 700.5 185.5C700.3 183.6 698.9 177.7 698.1 175.9C697.4 174.1 696.4 174.7 696.0 174.5" fill="none" stroke="#ee1c24" stroke-width="2.0" stroke-linecap="round" stroke-linejoin="round"/><path d="M696.0 174.5C696.0 176.8 696.0 183.5 696.0 188.0C696.0 192.5 696.0 199.2 696.0 201.4" fill="none" stroke="#ee1c24" stroke-width="2.0" stroke-linecap="round" stroke-linejoin="round"/><path d="M720.1 178.3C718.5 178.7 716.1 178.7 714.6 180.0C713.1 181.3 712.0 183.8 711.2 186.2C710.5 188.6 710.2 192.1 710.1 194.5C710.0 196.9 709.5 199.0 710.5 200.7C711.5 202.4 713.5 203.7 716.0 204.8C718.5 205.9 722.6 207.2 725.7 207.2C728.8 207.2 732.2 206.1 734.6 204.8C737.0 203.5 739.0 201.2 740.1 199.3C741.2 197.4 741.5 195.4 741.2 193.1C740.9 190.8 739.8 187.7 738.1 185.5C736.4 183.3 733.5 181.3 731.2 180.0C728.9 178.7 726.1 177.9 724.3 177.6C722.4 177.3 721.7 177.9 720.1 178.3" fill="none" stroke="#ee1c24" stroke-width="2.0" stroke-linecap="round" stroke-linejoin="round"/></svg>
</div></body></html>
